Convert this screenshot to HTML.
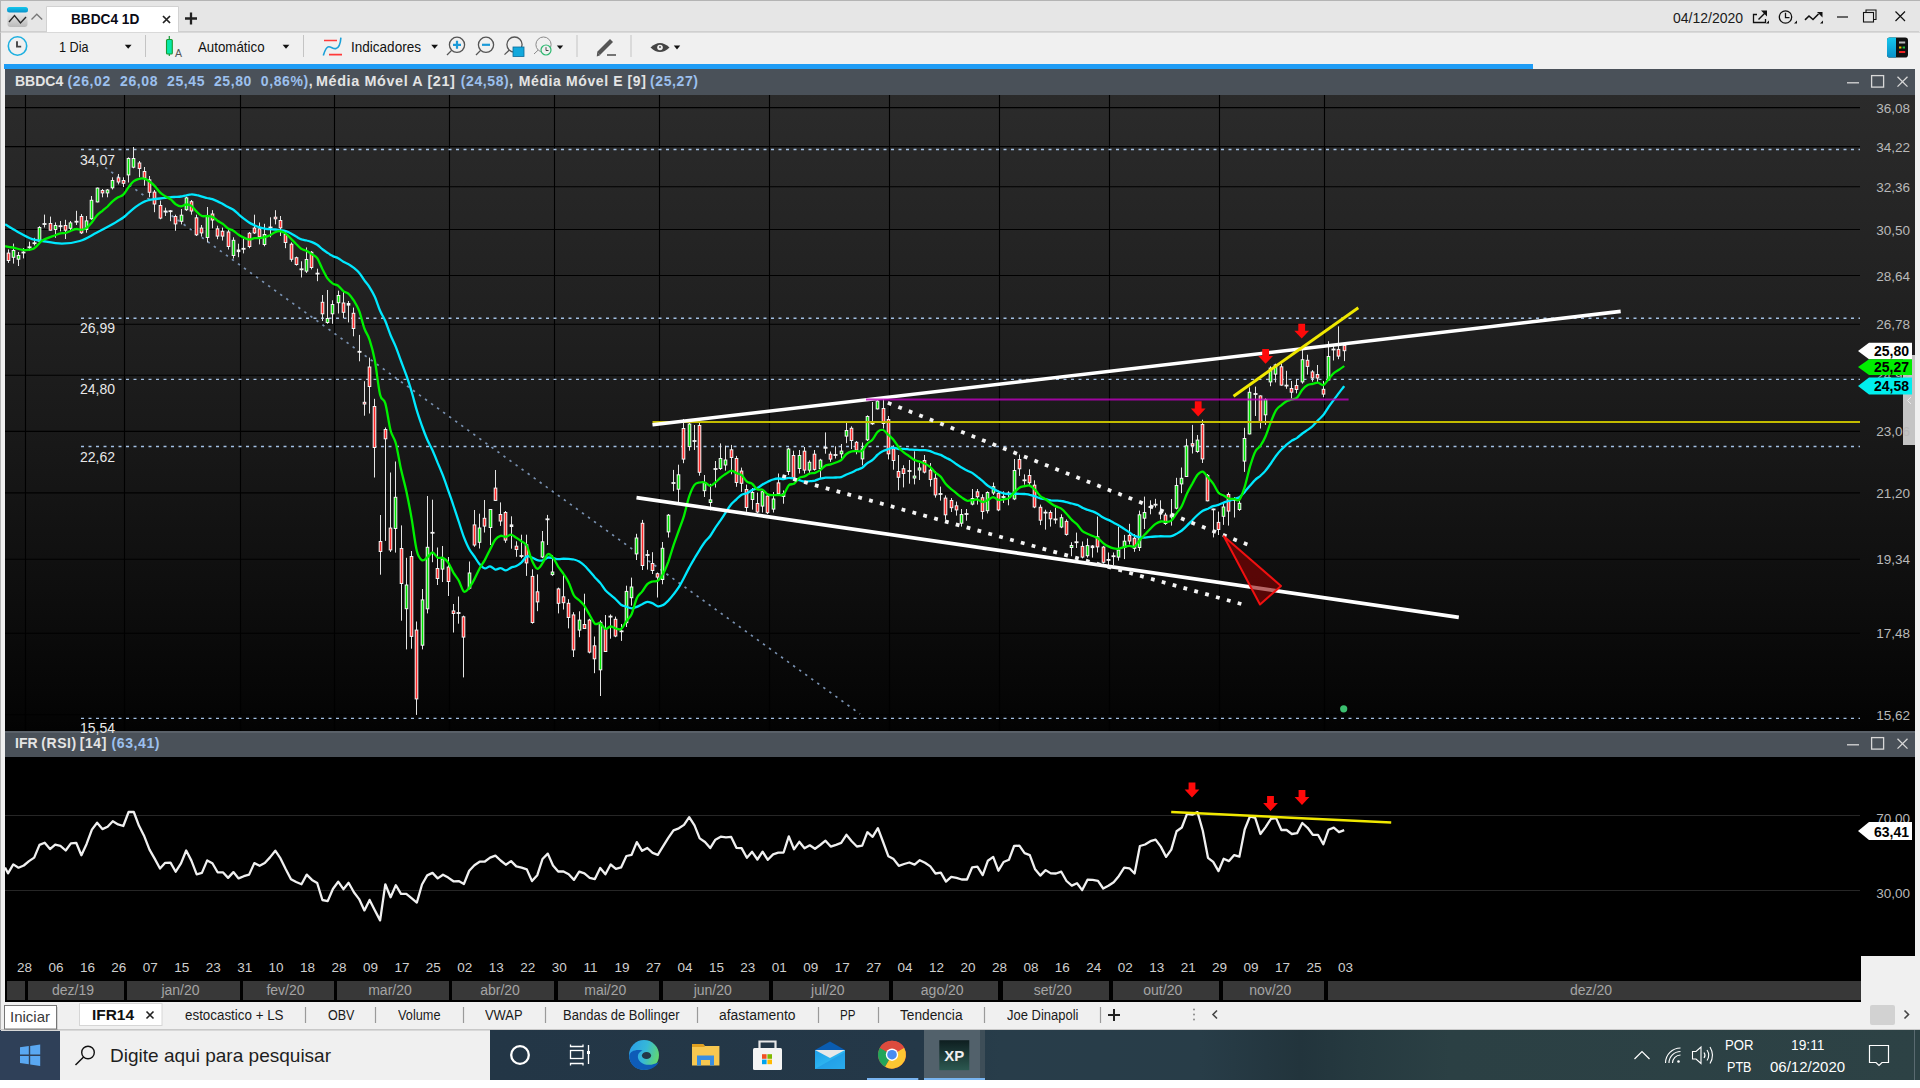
<!DOCTYPE html>
<html><head><meta charset="utf-8">
<style>
*{margin:0;padding:0;box-sizing:border-box}
html,body{width:1920px;height:1088px;overflow:hidden;background:#fff;font-family:"Liberation Sans",sans-serif;position:relative}
.a{position:absolute}
#titlebar{left:0;top:0;width:1920px;height:32px;background:#e6e6e6;border-top:1px solid #b4b4b4;border-left:1px solid #b4b4b4}
#toolbar{left:0;top:32px;width:1920px;height:38px;background:#f0f0f0;border-left:1px solid #b4b4b4;border-top:1px solid #d9d9d9}
#leftbar{left:0;top:64px;width:5px;height:966px;background:#f0f0f0;border-left:1px solid #b4b4b4}
#rightbar{left:1915px;top:64px;width:5px;height:966px;background:#f0f0f0}
#progress{left:4px;top:64px;width:1529px;height:5px;background:#1e9cf5}
.hdr{left:5px;width:1910px;height:26px;background:#4a5159}
.hdrtxt{left:15px;font-weight:bold;font-size:14px;color:#e6e6e6;white-space:nowrap}
.hdrtxt b{color:#9cc0ee;font-weight:bold}
#rsi{left:5px;top:757px;width:1910px;height:199px;background:#000}
#axis{left:5px;top:955px;width:1856px;height:47px;background:#000}
#tabs{left:0;top:1002px;width:1920px;height:28px;background:#f0f0f0;border-left:1px solid #b4b4b4}
#taskbar{left:0;top:1030px;width:1920px;height:50px;background:linear-gradient(90deg,#22344a,#24384a 35%,#29404a 70%,#2b4145)}
svg text{font-family:"Liberation Sans",sans-serif}
.pl{font-size:13.5px;fill:#b9b9b9;text-anchor:end}
.ll{font-size:14px;fill:#e8e8e8}
.tg{font-size:14px;font-weight:bold;fill:#000;text-anchor:end}
.dl{font-size:13.5px;color:#cfcfcf;white-space:nowrap;top:960px;transform:translateX(-50%)}
.mb{top:981px;height:19px;background:#383838;color:#a4a4a4;font-size:14px;text-align:center;line-height:19px;padding-right:6px}
.t13{font-size:13.5px;color:#111;white-space:nowrap}
.sep{width:1px;background:#9a9a9a}
.tb{color:#fff;white-space:nowrap}
.hb{font-weight:bold;font-size:14px;letter-spacing:0.6px;white-space:nowrap}
.tab{font-size:14px;color:#1a1a1a}
</style></head><body>
<div id="titlebar" class="a"></div>
<div id="toolbar" class="a"></div>
<div id="leftbar" class="a"></div>
<div id="rightbar" class="a"></div>
<div id="progress" class="a"></div>
<div class="a hdr" style="top:69px"></div>
<div class="a hdr" style="top:731px;border-top:2px solid #5a6169"></div>
<div id="rsi" class="a"></div>
<div id="axis" class="a"></div>
<svg class="a" style="left:0;top:0" width="1920" height="1088" viewBox="0 0 1920 1088">
<defs><linearGradient id="bg" x1="0" y1="0" x2="0" y2="1"><stop offset="0" stop-color="#2b2b2b"/><stop offset="0.35" stop-color="#202020"/><stop offset="0.55" stop-color="#181818"/><stop offset="0.8" stop-color="#0d0d0d"/><stop offset="1" stop-color="#030303"/></linearGradient><clipPath id="cc"><rect x="5" y="95" width="1910" height="636"/></clipPath><clipPath id="rc"><rect x="5" y="757" width="1855" height="198"/></clipPath></defs>
<rect x="5" y="95" width="1910" height="636" fill="url(#bg)"/>
<rect x="1903" y="355" width="12" height="90" fill="#c4c4c4"/><path d="M1911 397L1907.5 400.5L1911 404" fill="none" stroke="#e8e8e8" stroke-width="1"/>
<path d="M5 107.6H1860M5 146.6H1860M5 186.8H1860M5 229.5H1860M5 275.5H1860M5 324.2H1860M5 375.2H1860M5 431.4H1860M5 492.9H1860M5 559.3H1860M5 633.2H1860M5 714.8H1860M25.5 95V731M124.5 95V731M240.5 95V731M334.5 95V731M449.5 95V731M554.5 95V731M659.5 95V731M769.5 95V731M889.5 95V731M999.5 95V731M1109.5 95V731M1219.5 95V731M1324.5 95V731" stroke="#000" stroke-width="1.1" fill="none"/>
<text x="1910" y="112.6" class="pl">36,08</text>
<text x="1910" y="151.6" class="pl">34,22</text>
<text x="1910" y="191.8" class="pl">32,36</text>
<text x="1910" y="234.5" class="pl">30,50</text>
<text x="1910" y="280.5" class="pl">28,64</text>
<text x="1910" y="329.2" class="pl">26,78</text>
<text x="1910" y="380.2" class="pl">24,92</text>
<text x="1910" y="436.4" class="pl">23,06</text>
<text x="1910" y="497.9" class="pl">21,20</text>
<text x="1910" y="564.3" class="pl">19,34</text>
<text x="1910" y="638.2" class="pl">17,48</text>
<text x="1910" y="719.8" class="pl">15,62</text>
<path d="M81 149.5H1860" stroke="#a2c0e4" stroke-width="1.4" stroke-dasharray="3 4.5" fill="none"/>
<text x="80" y="164.5" class="ll">34,07</text>
<path d="M81 318.3H1860" stroke="#a2c0e4" stroke-width="1.4" stroke-dasharray="3 4.5" fill="none"/>
<text x="80" y="333.3" class="ll">26,99</text>
<path d="M81 379.4H1860" stroke="#a2c0e4" stroke-width="1.4" stroke-dasharray="3 4.5" fill="none"/>
<text x="80" y="394.4" class="ll">24,80</text>
<path d="M81 446.5H1860" stroke="#a2c0e4" stroke-width="1.4" stroke-dasharray="3 4.5" fill="none"/>
<text x="80" y="461.5" class="ll">22,62</text>
<path d="M81 718.4H1860" stroke="#a2c0e4" stroke-width="1.4" stroke-dasharray="3 4.5" fill="none"/>
<text x="80" y="733.4" class="ll">15,54</text>
<path d="M100.8 164.3L860.1 714" stroke="#7890b0" stroke-width="1.7" stroke-dasharray="2.4 5.05" stroke-dashoffset="2" fill="none"/>
<g clip-path="url(#cc)">
<path d="M8.5 249.4V262.9M13.5 243.6V263.6M18.5 252V266M23.5 248V258.4M29.5 241.7V250.7M34.5 237.8V245.5M39.5 226.2V243M44.5 214.6V227.5M50.5 216.6V230.7M55.5 222.4V237.8M60.5 221V231.4M65.5 219.8V239M70.5 221V230M76.5 210.8V225M81.5 214V234M86.5 216V232.7M91.5 196V219.8M97.5 187.6V202.4M102.5 189V197.3M107.5 189V197.3M112.5 177.3V189.5M118.5 174V184.4M123.5 177.3V187M128.5 157.4V182.5M133.5 147V168.3M139.5 161V177.3M144.5 167V185.7M149.5 176V197.3M154.5 190V212.2M160.5 200.6V219.3M165.5 207.7V216M170.5 210.2V221.2M175.5 214.7V230.8M181.5 209V224.4M186.5 196.7V210.9M191.5 200V214.7M196.5 214.7V236M201.5 225V236.6M207.5 207V242.4M212.5 210.2V228.3M217.5 225.7V239.2M222.5 227.6V240.5M228.5 229.5V249.5M233.5 237.3V258.5M238.5 243.7V257.2M243.5 238.6V253.4M249.5 232V248.2M254.5 214.7V234M259.5 222.5V244.4M264.5 223.8V246.3M270.5 217.3V237.3M275.5 210.2V224.4M280.5 216V236M285.5 231.5V248.2M291.5 242.4V261.7M296.5 256.6V265.6M301.5 261.3V277.5M306.5 247.4V273M311.5 251V269.4M317.5 268.7V281.2M322.5 295V321M327.5 290V323.8M332.5 300.3V323.8M338.5 290.7V313.5M343.5 292.2V318M348.5 301V322.4M353.5 307.6V336.3M359.5 334.9V361.3M364.5 381.2V415.7M369.5 357.6V413.5M374.5 398.8V477.5M380.5 515V574.7M385.5 427.5V540.9M390.5 472.5V552M395.5 461.5V552.6M401.5 525.4V620.7M406.5 557.8V649.4M411.5 551V648.7M416.5 621.5V714.9M422.5 589V649.4M427.5 496V613.4M432.5 499.7V562.2M437.5 547.5V585M442.5 546V582M448.5 557V596M453.5 604V632.5M458.5 596.5V623.7M463.5 615.6V677.4M469.5 561.5V589.4M474.5 510V546.8M479.5 513.7V548.5M484.5 500V532.5M490.5 509V545M495.5 470V500.9M500.5 502.4V525.9M505.5 511V542.8M511.5 516.3V548.7M516.5 541.3V556.8M521.5 534.7V558.2M526.5 534.7V575.9M532.5 569.3V623.7M537.5 574.4V611.2M542.5 531V558.2M547.5 514.9V545M552.5 555.3V575.9M558.5 587.6V613.4M563.5 575V609.5M568.5 599.2V628.4M573.5 612.2V657M579.5 611.3V637.2M584.5 593.7V629M589.5 618.8V653.4M594.5 636.5V673.2M600.5 620.3V696M605.5 615V652M610.5 614.4V638.7M615.5 616.6V637.2M621.5 624V640.9M626.5 585.7V627M631.5 577.6V605.6M636.5 533.8V560M642.5 519.9V570M647.5 550V569.6M652.5 552.2V574M657.5 572.5V597.5M662.5 542V584.3M668.5 514V537.5M673.5 469.9V491.2M678.5 464.7V502.2M683.5 419V463.2M689.5 422V450.7M694.5 425V450M699.5 422V475.7M704.5 475V497M710.5 483.8V510.3M715.5 461V487.5M720.5 443.4V469.9M725.5 445.6V470.6M731.5 444.9V474.3M736.5 455.9V486.8M741.5 467.6V491.9M746.5 484.6V511.8M752.5 488V509.6M757.5 492.6V513.2M762.5 490.4V512.5M767.5 494.9V514M773.5 492V512.5M778.5 473.5V494.9M783.5 490.4V503.7M788.5 447.8V475M793.5 450.7V479.4M799.5 450V473.5M804.5 447V473.5M809.5 460.3V474.3M814.5 450V470.6M820.5 458.8V478M825.5 432.4V453.7M830.5 451.5V461.8M835.5 446.3V458.5M841.5 444V459.4M846.5 422.6V443.2M851.5 426.3V449M856.5 441V454.3M862.5 442.5V465.3M867.5 415.3V441M872.5 402V424.9M877.5 398V409.4M883.5 399V428.5M888.5 416V459.4M893.5 445.4V469.7M898.5 455V490.3M903.5 465.3V487.4M909.5 460V483.7M914.5 451.3V484.4M919.5 463V480M924.5 455V473.4M930.5 463V486.6M935.5 471.2V497.6M940.5 486.6V500.6M945.5 495.4V519.7M951.5 498V512M956.5 501.6V515.6M961.5 509V526.6M966.5 509V520.7M972.5 489V505.3M977.5 489V504.6M982.5 494.3V519.3M987.5 491.3V513.4M993.5 482.5V495M998.5 490.6V511.2M1003.5 491.3V503M1008.5 491.3V505.3M1014.5 459V500.1M1019.5 454.6V475.9M1024.5 474.4V484.7M1029.5 469.3V486.2M1034.5 480.3V508.2M1040.5 504.6V525.1M1045.5 509.7V529.6M1050.5 510.4V526.6M1055.5 507.6V523.8M1061.5 514.3V528.2M1066.5 519.4V535.6M1071.5 542.2V556.2M1076.5 532.6V548M1082.5 541.5V558.4M1087.5 538.5V557.6M1092.5 545.1V557.6M1097.5 516.5V552.5M1103.5 545.9V563.5M1108.5 552.5V565M1113.5 552.5V565M1118.5 526.8V560.6M1124.5 534.9V559.1M1129.5 523.8V544.4M1134.5 534V551.8M1139.5 510.6V551M1144.5 496.6V529M1150.5 500.3V514.3M1155.5 498.8V507.6M1160.5 500.3V519.4M1165.5 512.8V524.9M1171.5 499V525.6M1176.5 477.8V509.4M1181.5 467.5V493.2M1186.5 438.8V477M1192.5 424.9V453.5M1197.5 435V452.8M1202.5 419.7V463M1207.5 474V501.3M1213.5 508.7V537.4M1218.5 511.6V535M1223.5 503.5V524.9M1228.5 492.5V525.6M1234.5 497V517.5M1239.5 500.6V510.9M1244.5 427.8V471.9M1249.5 387.4V434.4M1255.5 386.6V416M1260.5 395.4V428.5M1265.5 398.4V424.9M1270.5 366.3V386.2M1275.5 363.7V382.4M1281.5 363.7V385.6M1286.5 370.8V388.8M1291.5 381V398.5M1296.5 379.2V393.3M1302.5 349.5V383.7M1307.5 354.7V374.6M1312.5 370.1V381.7M1317.5 365V382.4M1323.5 381V397.2M1328.5 341.2V381M1333.5 345.7V360.5M1338.5 326.4V359.2M1344.5 344V361.1" stroke="#e4e4e4" stroke-width="1" fill="none"/>
<g fill="#f4f4f4"><rect x="6.7" y="252.6" width="3.6" height="8.4"/><rect x="11.7" y="250" width="3.6" height="7.8"/><rect x="16.7" y="255" width="3.6" height="4.7"/><rect x="21.5" y="251.6" width="4" height="1.8"/><rect x="27.5" y="246.4" width="4" height="1.8"/><rect x="32.5" y="242.3" width="4" height="1.8"/><rect x="37.7" y="227" width="3.6" height="14.7"/><rect x="42.5" y="223.1" width="4" height="1.8"/><rect x="48.7" y="223" width="3.6" height="7.7"/><rect x="53.7" y="225" width="3.6" height="5"/><rect x="58.5" y="225.3" width="4" height="1.8"/><rect x="63.7" y="225" width="3.6" height="5.7"/><rect x="68.7" y="222.4" width="3.6" height="6.4"/><rect x="74.5" y="220.8" width="4" height="1.8"/><rect x="79.7" y="216" width="3.6" height="17.3"/><rect x="84.7" y="220.4" width="3.6" height="9.6"/><rect x="89.7" y="199.8" width="3.6" height="19.4"/><rect x="95.7" y="187.6" width="3.6" height="14.8"/><rect x="100.7" y="190" width="3.6" height="3.4"/><rect x="105.7" y="189.5" width="3.6" height="3.9"/><rect x="110.7" y="180" width="3.6" height="8.3"/><rect x="116.7" y="177.3" width="3.6" height="5.2"/><rect x="121.7" y="180" width="3.6" height="3.8"/><rect x="126.7" y="158" width="3.6" height="17.4"/><rect x="131.7" y="158" width="3.6" height="9.7"/><rect x="137.7" y="162.5" width="3.6" height="6.5"/><rect x="142.7" y="171" width="3.6" height="7.6"/><rect x="147.7" y="179.3" width="3.6" height="13.5"/><rect x="152.7" y="191.6" width="3.6" height="12.9"/><rect x="158.7" y="205" width="3.6" height="13.6"/><rect x="163.5" y="210.6" width="4" height="1.8"/><rect x="168.5" y="210.3" width="4" height="1.8"/><rect x="173.7" y="216" width="3.6" height="8.4"/><rect x="179.7" y="214.7" width="3.6" height="7.1"/><rect x="184.7" y="197.4" width="3.6" height="12.8"/><rect x="189.7" y="201.2" width="3.6" height="10.3"/><rect x="194.7" y="217.3" width="3.6" height="18"/><rect x="199.7" y="227.6" width="3.6" height="5.8"/><rect x="205.7" y="216" width="3.6" height="22"/><rect x="210.7" y="213.5" width="3.6" height="7"/><rect x="215.7" y="228.3" width="3.6" height="8.3"/><rect x="220.7" y="230.8" width="3.6" height="5.8"/><rect x="226.7" y="231.5" width="3.6" height="15.5"/><rect x="231.7" y="239.8" width="3.6" height="16.2"/><rect x="236.7" y="249.5" width="3.6" height="2.6"/><rect x="241.5" y="247.9" width="4" height="1.8"/><rect x="247.7" y="232.8" width="3.6" height="14.2"/><rect x="252.7" y="227.6" width="3.6" height="5.8"/><rect x="257.7" y="228.3" width="3.6" height="9"/><rect x="262.7" y="234" width="3.6" height="11"/><rect x="268.5" y="226.6" width="4" height="1.8"/><rect x="273.7" y="216.7" width="3.6" height="2.6"/><rect x="278.7" y="220" width="3.6" height="8.3"/><rect x="283.7" y="234" width="3.6" height="9"/><rect x="289.7" y="243.7" width="3.6" height="16.1"/><rect x="294.7" y="257.2" width="3.6" height="7.8"/><rect x="299.5" y="268.4" width="4" height="1.8"/><rect x="304.7" y="259" width="3.6" height="12.6"/><rect x="309.7" y="251.8" width="3.6" height="16.2"/><rect x="315.5" y="272.7" width="4" height="1.8"/><rect x="320.7" y="301.8" width="3.6" height="12.5"/><rect x="325.7" y="318" width="3.6" height="5"/><rect x="330.7" y="304" width="3.6" height="10.3"/><rect x="336.7" y="295" width="3.6" height="8.2"/><rect x="341.7" y="302.5" width="3.6" height="10.3"/><rect x="346.7" y="303" width="3.6" height="2.6"/><rect x="351.7" y="312.8" width="3.6" height="16.2"/><rect x="357.5" y="350.9" width="4" height="1.8"/><rect x="362.7" y="401.8" width="3.6" height="2.7"/><rect x="367.7" y="366.5" width="3.6" height="20.5"/><rect x="372.7" y="406" width="3.6" height="42"/><rect x="378.7" y="541" width="3.6" height="11"/><rect x="383.7" y="429" width="3.6" height="10.3"/><rect x="388.7" y="527.6" width="3.6" height="22.8"/><rect x="393.7" y="496.8" width="3.6" height="32.2"/><rect x="399.7" y="548" width="3.6" height="36"/><rect x="404.7" y="584.5" width="3.6" height="24.7"/><rect x="409.7" y="556" width="3.6" height="80.9"/><rect x="414.7" y="629.6" width="3.6" height="69.8"/><rect x="420.7" y="599.4" width="3.6" height="46.3"/><rect x="425.7" y="546.8" width="3.6" height="62.5"/><rect x="430.5" y="531.9" width="4" height="1.8"/><rect x="435.7" y="568" width="3.6" height="11"/><rect x="440.7" y="558.5" width="3.6" height="11.1"/><rect x="446.7" y="566.6" width="3.6" height="15.4"/><rect x="451.7" y="610.4" width="3.6" height="3.6"/><rect x="456.5" y="612.1" width="4" height="1.8"/><rect x="461.7" y="616.3" width="3.6" height="21.3"/><rect x="467.7" y="572.5" width="3.6" height="16.2"/><rect x="472.7" y="524.4" width="3.6" height="21.1"/><rect x="477.7" y="527.5" width="3.6" height="15.3"/><rect x="482.7" y="517.8" width="3.6" height="8.8"/><rect x="488.7" y="509" width="3.6" height="19"/><rect x="493.7" y="487.6" width="3.6" height="13.3"/><rect x="498.7" y="514" width="3.6" height="7.5"/><rect x="503.7" y="512" width="3.6" height="28.6"/><rect x="509.7" y="524.4" width="3.6" height="2.6"/><rect x="514.7" y="545.7" width="3.6" height="4.3"/><rect x="519.5" y="555.1" width="4" height="1.8"/><rect x="524.7" y="544.3" width="3.6" height="19.1"/><rect x="530.7" y="575.9" width="3.6" height="47.1"/><rect x="535.7" y="591.3" width="3.6" height="11.1"/><rect x="540.7" y="541.3" width="3.6" height="16.2"/><rect x="545.5" y="518.4" width="4" height="1.8"/><rect x="550.7" y="571.5" width="3.6" height="3.6"/><rect x="556.7" y="588.4" width="3.6" height="15.4"/><rect x="561.7" y="596.3" width="3.6" height="6.9"/><rect x="566.7" y="602.8" width="3.6" height="15.2"/><rect x="571.7" y="614.4" width="3.6" height="36"/><rect x="577.7" y="619.6" width="3.6" height="11"/><rect x="582.7" y="624" width="3.6" height="5"/><rect x="587.7" y="619.6" width="3.6" height="33"/><rect x="592.7" y="645.3" width="3.6" height="14"/><rect x="598.7" y="621.8" width="3.6" height="48.5"/><rect x="603.7" y="629" width="3.6" height="23"/><rect x="608.5" y="615.7" width="4" height="1.8"/><rect x="613.7" y="618.8" width="3.6" height="17.7"/><rect x="619.5" y="630.4" width="4" height="1.8"/><rect x="624.7" y="590.9" width="3.6" height="32.3"/><rect x="629.7" y="586.5" width="3.6" height="11.7"/><rect x="634.7" y="537.5" width="3.6" height="16.9"/><rect x="640.7" y="522.8" width="3.6" height="43.2"/><rect x="645.5" y="554.1" width="4" height="1.8"/><rect x="650.7" y="563" width="3.6" height="8"/><rect x="655.7" y="573.2" width="3.6" height="4.4"/><rect x="660.7" y="547.8" width="3.6" height="32.2"/><rect x="666.7" y="514.7" width="3.6" height="17.7"/><rect x="671.5" y="482.1" width="4" height="1.8"/><rect x="676.7" y="474.3" width="3.6" height="15.4"/><rect x="681.7" y="428" width="3.6" height="31.6"/><rect x="687.7" y="423.5" width="3.6" height="23.5"/><rect x="692.5" y="440.1" width="4" height="1.8"/><rect x="697.7" y="425" width="3.6" height="47.8"/><rect x="702.7" y="482.4" width="3.6" height="8.8"/><rect x="708.7" y="499.3" width="3.6" height="3.7"/><rect x="713.5" y="468.1" width="4" height="1.8"/><rect x="718.7" y="458" width="3.6" height="11"/><rect x="723.7" y="459.5" width="3.6" height="6"/><rect x="729.7" y="449.3" width="3.6" height="8.7"/><rect x="734.7" y="458" width="3.6" height="25"/><rect x="739.7" y="470.6" width="3.6" height="13.2"/><rect x="744.7" y="489" width="3.6" height="19"/><rect x="750.7" y="492" width="3.6" height="8"/><rect x="755.7" y="503" width="3.6" height="9.5"/><rect x="760.7" y="491.2" width="3.6" height="15.4"/><rect x="765.7" y="495.6" width="3.6" height="17.6"/><rect x="771.7" y="498.5" width="3.6" height="11.1"/><rect x="776.7" y="482.4" width="3.6" height="11.6"/><rect x="781.7" y="493.4" width="3.6" height="3.6"/><rect x="786.7" y="448.5" width="3.6" height="23.5"/><rect x="791.7" y="455" width="3.6" height="23"/><rect x="797.7" y="455" width="3.6" height="14"/><rect x="802.7" y="450.7" width="3.6" height="19.9"/><rect x="807.7" y="461.8" width="3.6" height="8.8"/><rect x="812.7" y="453.7" width="3.6" height="16.2"/><rect x="818.7" y="459.6" width="3.6" height="9.4"/><rect x="823.5" y="446.9" width="4" height="1.8"/><rect x="828.7" y="453.7" width="3.6" height="5.9"/><rect x="833.5" y="454.1" width="4" height="1.8"/><rect x="839.7" y="450.6" width="3.6" height="3.7"/><rect x="844.7" y="430" width="3.6" height="6.6"/><rect x="849.7" y="427.8" width="3.6" height="13.2"/><rect x="854.7" y="441.8" width="3.6" height="8.8"/><rect x="860.7" y="448.4" width="3.6" height="11"/><rect x="865.7" y="416" width="3.6" height="24.3"/><rect x="870.5" y="422.5" width="4" height="1.8"/><rect x="875.7" y="400.6" width="3.6" height="8.8"/><rect x="881.7" y="408" width="3.6" height="16"/><rect x="886.7" y="419" width="3.6" height="35.3"/><rect x="891.7" y="448.4" width="3.6" height="12.6"/><rect x="896.7" y="471" width="3.6" height="6.8"/><rect x="901.7" y="468.2" width="3.6" height="5.8"/><rect x="907.5" y="470.1" width="4" height="1.8"/><rect x="912.7" y="475.6" width="3.6" height="2.9"/><rect x="917.7" y="467.5" width="3.6" height="3"/><rect x="922.7" y="460" width="3.6" height="12.6"/><rect x="928.7" y="469.7" width="3.6" height="10.3"/><rect x="933.7" y="477.8" width="3.6" height="17.6"/><rect x="938.5" y="493.1" width="4" height="1.8"/><rect x="943.7" y="497.6" width="3.6" height="17.7"/><rect x="949.7" y="500" width="3.6" height="8.2"/><rect x="954.7" y="505.3" width="3.6" height="5.1"/><rect x="959.7" y="514" width="3.6" height="9.7"/><rect x="964.5" y="513.1" width="4" height="1.8"/><rect x="970.7" y="498" width="3.6" height="6.6"/><rect x="975.7" y="491.3" width="3.6" height="5.9"/><rect x="980.7" y="497.2" width="3.6" height="14.8"/><rect x="985.7" y="492" width="3.6" height="19.2"/><rect x="991.7" y="486.2" width="3.6" height="7.3"/><rect x="996.7" y="492.8" width="3.6" height="17.6"/><rect x="1001.5" y="496.1" width="4" height="1.8"/><rect x="1006.5" y="492.6" width="4" height="1.8"/><rect x="1012.7" y="470" width="3.6" height="29.4"/><rect x="1017.7" y="459" width="3.6" height="10.3"/><rect x="1022.5" y="479.4" width="4" height="1.8"/><rect x="1027.7" y="475" width="3.6" height="8.2"/><rect x="1032.7" y="484.7" width="3.6" height="22.8"/><rect x="1038.7" y="506.8" width="3.6" height="13.9"/><rect x="1043.5" y="511.7" width="4" height="1.8"/><rect x="1048.7" y="512" width="3.6" height="7.3"/><rect x="1053.5" y="518.5" width="4" height="1.8"/><rect x="1059.7" y="517.2" width="3.6" height="10.3"/><rect x="1064.7" y="520.9" width="3.6" height="14"/><rect x="1069.7" y="545" width="3.6" height="3"/><rect x="1074.5" y="541.3" width="4" height="1.8"/><rect x="1080.7" y="545.9" width="3.6" height="11.7"/><rect x="1085.7" y="545.1" width="3.6" height="11.1"/><rect x="1090.7" y="545.5" width="3.6" height="2.6"/><rect x="1095.7" y="536.3" width="3.6" height="11.1"/><rect x="1101.7" y="546.6" width="3.6" height="16.2"/><rect x="1106.5" y="559" width="4" height="1.8"/><rect x="1111.5" y="555.3" width="4" height="1.8"/><rect x="1116.7" y="549.6" width="3.6" height="8"/><rect x="1122.7" y="540.7" width="3.6" height="7.3"/><rect x="1127.7" y="534.9" width="3.6" height="6.6"/><rect x="1132.7" y="537.8" width="3.6" height="11"/><rect x="1137.7" y="514.3" width="3.6" height="33.7"/><rect x="1142.7" y="512" width="3.6" height="6.7"/><rect x="1148.5" y="506.1" width="4" height="1.8"/><rect x="1153.5" y="503.8" width="4" height="1.8"/><rect x="1158.7" y="512" width="3.6" height="2.6"/><rect x="1163.7" y="514.6" width="3.6" height="9.4"/><rect x="1169.7" y="514.6" width="3.6" height="2.9"/><rect x="1174.7" y="485" width="3.6" height="23.7"/><rect x="1179.7" y="477.8" width="3.6" height="6.6"/><rect x="1184.7" y="445.4" width="3.6" height="31.6"/><rect x="1190.7" y="443.2" width="3.6" height="3"/><rect x="1195.7" y="439.6" width="3.6" height="12.4"/><rect x="1200.7" y="424" width="3.6" height="35.4"/><rect x="1205.7" y="474.9" width="3.6" height="26.4"/><rect x="1211.5" y="508.5" width="4" height="1.8"/><rect x="1216.7" y="521.9" width="3.6" height="8.1"/><rect x="1221.7" y="506.5" width="3.6" height="10.3"/><rect x="1226.7" y="494" width="3.6" height="17.6"/><rect x="1232.5" y="499" width="4" height="1.8"/><rect x="1237.7" y="502.8" width="3.6" height="7.2"/><rect x="1242.7" y="438" width="3.6" height="23.6"/><rect x="1247.7" y="391.8" width="3.6" height="42.6"/><rect x="1253.5" y="393.1" width="4" height="1.8"/><rect x="1258.7" y="395.4" width="3.6" height="27.2"/><rect x="1263.7" y="399" width="3.6" height="16.3"/><rect x="1268.7" y="367.6" width="3.6" height="14.8"/><rect x="1273.7" y="364.4" width="3.6" height="10.2"/><rect x="1279.7" y="366.3" width="3.6" height="19.3"/><rect x="1284.5" y="384.7" width="4" height="1.8"/><rect x="1289.7" y="388" width="3.6" height="4.7"/><rect x="1294.7" y="385" width="3.6" height="5"/><rect x="1300.7" y="359.2" width="3.6" height="23.2"/><rect x="1305.7" y="359.8" width="3.6" height="7.1"/><rect x="1310.7" y="371.4" width="3.6" height="7.1"/><rect x="1315.7" y="374" width="3.6" height="4.5"/><rect x="1321.7" y="388.8" width="3.6" height="5.8"/><rect x="1326.7" y="356" width="3.6" height="24.4"/><rect x="1331.5" y="348.6" width="4" height="1.8"/><rect x="1336.7" y="348.9" width="3.6" height="7.7"/><rect x="1342.7" y="345" width="3.6" height="6.2"/></g>
<g fill="#00e600"><rect x="12.7" y="251" width="1.6" height="5.8"/><rect x="17.7" y="256" width="1.6" height="2.7"/><rect x="38.7" y="228" width="1.6" height="12.7"/><rect x="54.7" y="226" width="1.6" height="3"/><rect x="69.7" y="223.4" width="1.6" height="4.4"/><rect x="85.7" y="221.4" width="1.6" height="7.6"/><rect x="90.7" y="200.8" width="1.6" height="17.4"/><rect x="96.7" y="188.6" width="1.6" height="12.8"/><rect x="106.7" y="190.5" width="1.6" height="1.9"/><rect x="111.7" y="181" width="1.6" height="6.3"/><rect x="127.7" y="159" width="1.6" height="15.4"/><rect x="132.7" y="159" width="1.6" height="7.7"/><rect x="180.7" y="215.7" width="1.6" height="5.1"/><rect x="185.7" y="198.4" width="1.6" height="10.8"/><rect x="206.7" y="217" width="1.6" height="20"/><rect x="232.7" y="240.8" width="1.6" height="14.2"/><rect x="263.7" y="235" width="1.6" height="9"/><rect x="305.7" y="260" width="1.6" height="10.6"/><rect x="326.7" y="319" width="1.6" height="3"/><rect x="331.7" y="305" width="1.6" height="8.3"/><rect x="337.7" y="296" width="1.6" height="6.2"/><rect x="394.7" y="497.8" width="1.6" height="30.2"/><rect x="405.7" y="585.5" width="1.6" height="22.7"/><rect x="421.7" y="600.4" width="1.6" height="44.3"/><rect x="426.7" y="547.8" width="1.6" height="60.5"/><rect x="441.7" y="559.5" width="1.6" height="9.1"/><rect x="468.7" y="573.5" width="1.6" height="14.2"/><rect x="478.7" y="528.5" width="1.6" height="13.3"/><rect x="489.7" y="510" width="1.6" height="17"/><rect x="541.7" y="542.3" width="1.6" height="14.2"/><rect x="551.7" y="572.5" width="1.6" height="1.6"/><rect x="578.7" y="620.6" width="1.6" height="9"/><rect x="599.7" y="622.8" width="1.6" height="46.5"/><rect x="625.7" y="591.9" width="1.6" height="30.3"/><rect x="630.7" y="587.5" width="1.6" height="9.7"/><rect x="635.7" y="538.5" width="1.6" height="14.9"/><rect x="661.7" y="548.8" width="1.6" height="30.2"/><rect x="667.7" y="515.7" width="1.6" height="15.7"/><rect x="677.7" y="475.3" width="1.6" height="13.4"/><rect x="688.7" y="424.5" width="1.6" height="21.5"/><rect x="703.7" y="483.4" width="1.6" height="6.8"/><rect x="709.7" y="500.3" width="1.6" height="1.7"/><rect x="719.7" y="459" width="1.6" height="9"/><rect x="724.7" y="460.5" width="1.6" height="4"/><rect x="751.7" y="493" width="1.6" height="6"/><rect x="761.7" y="492.2" width="1.6" height="13.4"/><rect x="772.7" y="499.5" width="1.6" height="9.1"/><rect x="782.7" y="494.4" width="1.6" height="1.6"/><rect x="787.7" y="449.5" width="1.6" height="21.5"/><rect x="798.7" y="456" width="1.6" height="12"/><rect x="808.7" y="462.8" width="1.6" height="6.8"/><rect x="819.7" y="460.6" width="1.6" height="7.4"/><rect x="840.7" y="451.6" width="1.6" height="1.7"/><rect x="845.7" y="431" width="1.6" height="4.6"/><rect x="861.7" y="449.4" width="1.6" height="9"/><rect x="866.7" y="417" width="1.6" height="22.3"/><rect x="876.7" y="401.6" width="1.6" height="6.8"/><rect x="913.7" y="476.6" width="1.6" height="0.9"/><rect x="918.7" y="468.5" width="1.6" height="1"/><rect x="960.7" y="515" width="1.6" height="7.7"/><rect x="971.7" y="499" width="1.6" height="4.6"/><rect x="986.7" y="493" width="1.6" height="17.2"/><rect x="992.7" y="487.2" width="1.6" height="5.3"/><rect x="1013.7" y="471" width="1.6" height="27.4"/><rect x="1060.7" y="518.2" width="1.6" height="8.3"/><rect x="1070.7" y="546" width="1.6" height="1"/><rect x="1086.7" y="546.1" width="1.6" height="9.1"/><rect x="1117.7" y="550.6" width="1.6" height="6"/><rect x="1123.7" y="541.7" width="1.6" height="5.3"/><rect x="1138.7" y="515.3" width="1.6" height="31.7"/><rect x="1143.7" y="513" width="1.6" height="4.7"/><rect x="1170.7" y="515.6" width="1.6" height="0.9"/><rect x="1175.7" y="486" width="1.6" height="21.7"/><rect x="1180.7" y="478.8" width="1.6" height="4.6"/><rect x="1185.7" y="446.4" width="1.6" height="29.6"/><rect x="1196.7" y="440.6" width="1.6" height="10.4"/><rect x="1222.7" y="507.5" width="1.6" height="8.3"/><rect x="1238.7" y="503.8" width="1.6" height="5.2"/><rect x="1243.7" y="439" width="1.6" height="21.6"/><rect x="1248.7" y="392.8" width="1.6" height="40.6"/><rect x="1264.7" y="400" width="1.6" height="14.3"/><rect x="1269.7" y="368.6" width="1.6" height="12.8"/><rect x="1274.7" y="365.4" width="1.6" height="8.2"/><rect x="1301.7" y="360.2" width="1.6" height="21.2"/><rect x="1327.7" y="357" width="1.6" height="22.4"/></g>
<g fill="#ff2a2a"><rect x="7.7" y="253.6" width="1.6" height="6.4"/><rect x="49.7" y="224" width="1.6" height="5.7"/><rect x="64.7" y="226" width="1.6" height="3.7"/><rect x="80.7" y="217" width="1.6" height="15.3"/><rect x="101.7" y="191" width="1.6" height="1.4"/><rect x="117.7" y="178.3" width="1.6" height="3.2"/><rect x="122.7" y="181" width="1.6" height="1.8"/><rect x="138.7" y="163.5" width="1.6" height="4.5"/><rect x="143.7" y="172" width="1.6" height="5.6"/><rect x="148.7" y="180.3" width="1.6" height="11.5"/><rect x="153.7" y="192.6" width="1.6" height="10.9"/><rect x="159.7" y="206" width="1.6" height="11.6"/><rect x="174.7" y="217" width="1.6" height="6.4"/><rect x="190.7" y="202.2" width="1.6" height="8.3"/><rect x="195.7" y="218.3" width="1.6" height="16"/><rect x="200.7" y="228.6" width="1.6" height="3.8"/><rect x="211.7" y="214.5" width="1.6" height="5"/><rect x="216.7" y="229.3" width="1.6" height="6.3"/><rect x="221.7" y="231.8" width="1.6" height="3.8"/><rect x="227.7" y="232.5" width="1.6" height="13.5"/><rect x="248.7" y="233.8" width="1.6" height="12.2"/><rect x="253.7" y="228.6" width="1.6" height="3.8"/><rect x="258.7" y="229.3" width="1.6" height="7"/><rect x="274.7" y="217.7" width="1.6" height="0.6"/><rect x="279.7" y="221" width="1.6" height="6.3"/><rect x="284.7" y="235" width="1.6" height="7"/><rect x="290.7" y="244.7" width="1.6" height="14.1"/><rect x="295.7" y="258.2" width="1.6" height="5.8"/><rect x="310.7" y="252.8" width="1.6" height="14.2"/><rect x="321.7" y="302.8" width="1.6" height="10.5"/><rect x="342.7" y="303.5" width="1.6" height="8.3"/><rect x="352.7" y="313.8" width="1.6" height="14.2"/><rect x="363.7" y="402.8" width="1.6" height="0.7"/><rect x="368.7" y="367.5" width="1.6" height="18.5"/><rect x="373.7" y="407" width="1.6" height="40"/><rect x="379.7" y="542" width="1.6" height="9"/><rect x="384.7" y="430" width="1.6" height="8.3"/><rect x="389.7" y="528.6" width="1.6" height="20.8"/><rect x="400.7" y="549" width="1.6" height="34"/><rect x="410.7" y="557" width="1.6" height="78.9"/><rect x="415.7" y="630.6" width="1.6" height="67.8"/><rect x="436.7" y="569" width="1.6" height="9"/><rect x="447.7" y="567.6" width="1.6" height="13.4"/><rect x="452.7" y="611.4" width="1.6" height="1.6"/><rect x="462.7" y="617.3" width="1.6" height="19.3"/><rect x="473.7" y="525.4" width="1.6" height="19.1"/><rect x="483.7" y="518.8" width="1.6" height="6.8"/><rect x="494.7" y="488.6" width="1.6" height="11.3"/><rect x="499.7" y="515" width="1.6" height="5.5"/><rect x="504.7" y="513" width="1.6" height="26.6"/><rect x="515.7" y="546.7" width="1.6" height="2.3"/><rect x="525.7" y="545.3" width="1.6" height="17.1"/><rect x="531.7" y="576.9" width="1.6" height="45.1"/><rect x="536.7" y="592.3" width="1.6" height="9.1"/><rect x="557.7" y="589.4" width="1.6" height="13.4"/><rect x="562.7" y="597.3" width="1.6" height="4.9"/><rect x="567.7" y="603.8" width="1.6" height="13.2"/><rect x="572.7" y="615.4" width="1.6" height="34"/><rect x="583.7" y="625" width="1.6" height="3"/><rect x="588.7" y="620.6" width="1.6" height="31"/><rect x="593.7" y="646.3" width="1.6" height="12"/><rect x="604.7" y="630" width="1.6" height="21"/><rect x="614.7" y="619.8" width="1.6" height="15.7"/><rect x="641.7" y="523.8" width="1.6" height="41.2"/><rect x="651.7" y="564" width="1.6" height="6"/><rect x="656.7" y="574.2" width="1.6" height="2.4"/><rect x="682.7" y="429" width="1.6" height="29.6"/><rect x="698.7" y="426" width="1.6" height="45.8"/><rect x="730.7" y="450.3" width="1.6" height="6.7"/><rect x="735.7" y="459" width="1.6" height="23"/><rect x="740.7" y="471.6" width="1.6" height="11.2"/><rect x="745.7" y="490" width="1.6" height="17"/><rect x="756.7" y="504" width="1.6" height="7.5"/><rect x="766.7" y="496.6" width="1.6" height="15.6"/><rect x="777.7" y="483.4" width="1.6" height="9.6"/><rect x="792.7" y="456" width="1.6" height="21"/><rect x="803.7" y="451.7" width="1.6" height="17.9"/><rect x="813.7" y="454.7" width="1.6" height="14.2"/><rect x="829.7" y="454.7" width="1.6" height="3.9"/><rect x="850.7" y="428.8" width="1.6" height="11.2"/><rect x="855.7" y="442.8" width="1.6" height="6.8"/><rect x="882.7" y="409" width="1.6" height="14"/><rect x="887.7" y="420" width="1.6" height="33.3"/><rect x="892.7" y="449.4" width="1.6" height="10.6"/><rect x="897.7" y="472" width="1.6" height="4.8"/><rect x="902.7" y="469.2" width="1.6" height="3.8"/><rect x="923.7" y="461" width="1.6" height="10.6"/><rect x="929.7" y="470.7" width="1.6" height="8.3"/><rect x="934.7" y="478.8" width="1.6" height="15.6"/><rect x="944.7" y="498.6" width="1.6" height="15.7"/><rect x="950.7" y="501" width="1.6" height="6.2"/><rect x="955.7" y="506.3" width="1.6" height="3.1"/><rect x="976.7" y="492.3" width="1.6" height="3.9"/><rect x="981.7" y="498.2" width="1.6" height="12.8"/><rect x="997.7" y="493.8" width="1.6" height="15.6"/><rect x="1018.7" y="460" width="1.6" height="8.3"/><rect x="1028.7" y="476" width="1.6" height="6.2"/><rect x="1033.7" y="485.7" width="1.6" height="20.8"/><rect x="1039.7" y="507.8" width="1.6" height="11.9"/><rect x="1049.7" y="513" width="1.6" height="5.3"/><rect x="1065.7" y="521.9" width="1.6" height="12"/><rect x="1081.7" y="546.9" width="1.6" height="9.7"/><rect x="1096.7" y="537.3" width="1.6" height="9.1"/><rect x="1102.7" y="547.6" width="1.6" height="14.2"/><rect x="1128.7" y="535.9" width="1.6" height="4.6"/><rect x="1133.7" y="538.8" width="1.6" height="9"/><rect x="1164.7" y="515.6" width="1.6" height="7.4"/><rect x="1191.7" y="444.2" width="1.6" height="1"/><rect x="1201.7" y="425" width="1.6" height="33.4"/><rect x="1206.7" y="475.9" width="1.6" height="24.4"/><rect x="1217.7" y="522.9" width="1.6" height="6.1"/><rect x="1227.7" y="495" width="1.6" height="15.6"/><rect x="1259.7" y="396.4" width="1.6" height="25.2"/><rect x="1280.7" y="367.3" width="1.6" height="17.3"/><rect x="1290.7" y="389" width="1.6" height="2.7"/><rect x="1295.7" y="386" width="1.6" height="3"/><rect x="1306.7" y="360.8" width="1.6" height="5.1"/><rect x="1311.7" y="372.4" width="1.6" height="5.1"/><rect x="1316.7" y="375" width="1.6" height="2.5"/><rect x="1322.7" y="389.8" width="1.6" height="3.8"/><rect x="1337.7" y="349.9" width="1.6" height="5.7"/><rect x="1343.7" y="346" width="1.6" height="4.2"/></g>
<path d="M5.1 224.3C7.5 225.7 14.8 230.2 19.3 232.7C23.8 235.2 28.3 237.7 32.2 239.1C36.1 240.5 37.6 240.2 42.5 241C47.4 241.8 55.6 243.6 61.8 243.6C68 243.6 74 242.8 79.8 241C85.6 239.2 90.9 235.6 96.5 232.7C102.1 229.8 109.7 225.7 113.3 223.7C116.9 221.7 116.4 221.7 118.1 220.7C119.8 219.7 121.6 218.8 123.3 217.5C125.1 216.2 126.8 214.4 128.6 212.9C130.3 211.3 132.1 209.7 133.8 208.3C135.5 206.9 137.3 205.7 139 204.6C140.8 203.5 142.5 202.3 144.3 201.6C146 200.8 147.8 200.4 149.5 199.9C151.3 199.5 153 199.3 154.8 199C156.5 198.8 158.3 198.7 160 198.5C161.7 198.3 163.5 198.1 165.2 197.9C167 197.6 168.7 197.3 170.5 197.2C172.2 197 174 197 175.7 196.9C177.5 196.8 179.2 196.8 181 196.5C182.7 196.3 184.5 195.7 186.2 195.4C187.9 195 189.7 194.4 191.4 194.4C193.2 194.3 194.9 194.7 196.7 195.1C198.4 195.4 200.2 196.1 201.9 196.6C203.7 197.1 205.4 197.5 207.2 198C208.9 198.4 210.7 198.7 212.4 199.2C214.1 199.8 215.9 200.6 217.6 201.4C219.4 202.2 221.1 203.2 222.9 204.1C224.6 205.1 226.4 206.2 228.1 207.1C229.9 208.1 231.6 208.6 233.4 209.8C235.1 211 236.9 212.8 238.6 214.3C240.3 215.8 242.1 217.3 243.8 218.7C245.6 220.1 247.3 221.4 249.1 222.5C250.8 223.6 252.6 224.4 254.3 225.2C256.1 226 257.8 226.7 259.6 227.3C261.3 227.9 263.1 228.4 264.8 228.7C266.5 229 268.3 229 270 229.2C271.8 229.3 273.5 229.3 275.3 229.5C277 229.7 278.8 230.1 280.5 230.4C282.3 230.6 284 230.7 285.8 231.2C287.5 231.7 289.3 232.5 291 233.4C292.7 234.3 294.5 235.6 296.2 236.6C298 237.6 299.7 238.7 301.5 239.4C303.2 240 305 240 306.7 240.5C308.5 240.9 310.2 241.4 312 242.1C313.7 242.8 315.5 243.7 317.2 244.8C318.9 246 320.7 247.8 322.4 249.2C324.2 250.5 325.9 251.8 327.7 252.9C329.4 254.1 331.2 255.2 332.9 256.1C334.7 257 336.4 257.4 338.2 258.3C339.9 259.2 341.7 260.7 343.4 261.7C345.1 262.7 346.9 263.2 348.6 264.2C350.4 265.2 352.1 266.5 353.9 267.9C355.6 269.3 357.4 270.6 359.1 272.7C360.9 274.8 362.6 278 364.4 280.4C366.1 282.8 367.9 284.5 369.6 287.3C371.3 290 373.1 292.9 374.8 296.8C376.6 300.7 378.3 306.6 380.1 310.7C381.8 314.7 383.6 316.9 385.3 321C387.1 325.1 388.8 330.9 390.6 335.2C392.3 339.5 394.1 342.6 395.8 346.9C397.5 351.2 399.3 356.3 401 361C402.8 365.8 404.5 370.2 406.3 375.2C408 380.3 409.8 385.4 411.5 391.3C413.3 397.2 415 404.6 416.8 410.4C418.5 416.2 420.3 421.1 422 426C423.7 430.8 425.5 435.5 427.2 439.5C429 443.5 430.7 446.4 432.5 450.3C434.2 454.2 436 458.6 437.7 462.9C439.5 467.1 441.2 471.1 443 475.7C444.7 480.3 446.5 485.4 448.2 490.4C449.9 495.3 451.7 500.3 453.4 505.5C455.2 510.7 456.9 516.2 458.7 521.5C460.4 526.7 462.2 532.6 463.9 537.2C465.7 541.8 467.4 545.8 469.2 549C470.9 552.2 472.7 554 474.4 556.5C476.1 559 477.9 562.3 479.6 564.2C481.4 566.2 483.1 568.1 484.9 568.4C486.6 568.8 488.4 566.1 490.1 566.3C491.9 566.5 493.6 569.3 495.4 569.6C497.1 569.9 498.9 568 500.6 568.2C502.3 568.3 504.1 570.5 505.8 570.4C507.6 570.3 509.3 568.4 511.1 567.6C512.8 566.9 514.6 566.9 516.3 566C518.1 565.1 519.8 563.9 521.6 562.3C523.3 560.7 525.1 557.2 526.8 556.4C528.5 555.6 530.3 556.9 532 557.5C533.8 558.1 535.5 559.6 537.3 560.1C539 560.6 540.8 560.9 542.5 560.5C544.3 560.1 546 558 547.8 557.6C549.5 557.2 551.3 557.9 553 558.2C554.7 558.5 556.5 559.1 558.2 559.2C560 559.3 561.7 558.8 563.5 558.7C565.2 558.7 567 558.8 568.7 558.9C570.5 559.1 572.2 559 574 559.5C575.7 559.9 577.5 560.6 579.2 561.6C580.9 562.6 582.7 563.9 584.4 565.5C586.2 567.1 587.9 569.3 589.7 571.3C591.4 573.2 593.2 575.5 594.9 577.4C596.7 579.4 598.4 580.8 600.2 582.9C601.9 585 603.7 588.2 605.4 590.2C607.1 592.2 608.9 593.4 610.6 594.9C612.4 596.5 614.1 597.9 615.9 599.5C617.6 601.2 619.4 603.5 621.1 604.7C622.9 605.9 624.6 606.1 626.4 606.7C628.1 607.3 629.9 608.2 631.6 608.3C633.3 608.3 635.1 607.6 636.8 606.9C638.6 606.2 640.3 605 642.1 604.2C643.8 603.3 645.6 602 647.3 601.8C649.1 601.7 650.8 602.6 652.6 603.3C654.3 604.1 656.1 606 657.8 606.3C659.5 606.6 661.3 606.1 663 605.1C664.8 604.2 666.5 602.4 668.3 600.6C670 598.8 671.8 596.7 673.5 594.4C675.3 592.2 677 590 678.8 587.2C680.5 584.4 682.3 580.9 684 577.7C685.7 574.4 687.5 570.9 689.2 567.6C691 564.4 692.7 561.3 694.5 558.3C696.2 555.3 698 552.6 699.7 549.8C701.5 547.1 703.2 544 705 541.7C706.7 539.4 708.5 538.4 710.2 536C711.9 533.7 713.7 530.2 715.4 527.6C717.2 525 718.9 522.8 720.7 520.2C722.4 517.6 724.2 514.8 725.9 512.1C727.7 509.4 729.4 506.4 731.2 504.2C732.9 502.1 734.7 500.9 736.4 499.3C738.1 497.7 739.9 495.7 741.6 494.7C743.4 493.7 745.1 494.1 746.9 493.3C748.6 492.6 750.4 490.9 752.1 490C753.9 489.1 755.6 489 757.4 488.1C759.1 487.2 760.9 485.6 762.6 484.5C764.3 483.4 766.1 482.5 767.8 481.7C769.6 480.9 771.3 480 773.1 479.5C774.8 479 776.6 478.6 778.3 478.5C780.1 478.4 781.8 479.1 783.6 479C785.3 478.9 787.1 477.8 788.8 477.8C790.5 477.7 792.3 478.2 794 478.6C795.8 479.1 797.5 479.7 799.3 480.2C801 480.7 802.8 481.5 804.5 481.7C806.3 481.8 808 481.3 809.8 481.2C811.5 481 813.3 481 815 480.6C816.7 480.1 818.5 479.2 820.2 478.7C822 478.2 823.7 477.8 825.5 477.6C827.2 477.5 829 477.7 830.7 477.7C832.5 477.7 834.2 477.6 836 477.5C837.7 477.4 839.5 477.6 841.2 477.1C842.9 476.6 844.7 475.3 846.4 474.5C848.2 473.8 849.9 473.3 851.7 472.5C853.4 471.7 855.2 470.6 856.9 469.8C858.7 469 860.4 468.8 862.2 467.7C863.9 466.6 865.7 464.4 867.4 463.1C869.1 461.8 870.9 461.3 872.6 459.8C874.4 458.4 876.1 455.9 877.9 454.5C879.6 453 881.4 451.8 883.1 451C884.9 450.1 886.6 449.7 888.4 449.1C890.1 448.6 891.9 447.7 893.6 447.6C895.3 447.6 897.1 448.8 898.8 449C900.6 449.2 902.3 448.7 904.1 448.8C905.8 448.9 907.6 449.4 909.3 449.6C911.1 449.7 912.8 449.7 914.6 449.8C916.3 449.9 918.1 450 919.8 450.1C921.5 450.1 923.3 450 925 450.2C926.8 450.4 928.5 450.6 930.3 451.1C932 451.7 933.8 452.7 935.5 453.3C937.3 454 939 454.2 940.8 454.9C942.5 455.7 944.3 456.8 946 457.7C947.7 458.6 949.5 459.3 951.2 460.4C953 461.4 954.7 463 956.5 464.2C958.2 465.4 960 466.5 961.7 467.6C963.5 468.6 965.2 469.7 967 470.5C968.7 471.4 970.5 471.8 972.2 472.9C973.9 474 975.7 475.5 977.4 476.9C979.2 478.2 980.9 479.7 982.7 481.2C984.4 482.6 986.2 484.5 987.9 485.7C989.7 487 991.4 487.9 993.2 488.8C994.9 489.8 996.7 490.8 998.4 491.5C1000.1 492.3 1001.9 492.9 1003.6 493.3C1005.4 493.7 1007.1 493.9 1008.9 494C1010.6 494.1 1012.4 493.9 1014.1 493.8C1015.9 493.8 1017.6 493.7 1019.4 493.8C1021.1 493.8 1022.9 493.8 1024.6 494C1026.3 494.2 1028.1 494.3 1029.8 494.8C1031.6 495.2 1033.3 495.8 1035.1 496.4C1036.8 497 1038.6 497.9 1040.3 498.4C1042.1 498.8 1043.8 498.8 1045.6 499.2C1047.3 499.5 1049.1 500.1 1050.8 500.4C1052.5 500.6 1054.3 500.5 1056 500.6C1057.8 500.7 1059.5 500.7 1061.3 501C1063 501.2 1064.8 501.7 1066.5 502.1C1068.3 502.5 1070 503.1 1071.8 503.5C1073.5 504 1075.3 504.2 1077 504.8C1078.7 505.5 1080.5 506.8 1082.2 507.6C1084 508.4 1085.7 509.2 1087.5 509.8C1089.2 510.5 1091 510.7 1092.7 511.4C1094.5 512.1 1096.2 513 1098 514C1099.7 515 1101.5 516.6 1103.2 517.6C1104.9 518.6 1106.7 519.1 1108.4 519.9C1110.2 520.8 1111.9 521.8 1113.7 522.7C1115.4 523.6 1117.2 524.4 1118.9 525.4C1120.7 526.4 1122.4 527.7 1124.2 528.9C1125.9 530 1127.7 531.3 1129.4 532.4C1131.1 533.6 1132.9 535 1134.6 535.8C1136.4 536.6 1138.1 537 1139.9 537.3C1141.6 537.6 1143.4 537.6 1145.1 537.6C1146.9 537.5 1148.6 537.1 1150.4 536.9C1152.1 536.7 1153.9 536.6 1155.6 536.5C1157.3 536.4 1159.1 536.2 1160.8 536.1C1162.6 536.1 1164.3 536.3 1166.1 536.4C1167.8 536.4 1169.6 536.7 1171.3 536.2C1173.1 535.8 1174.8 534.7 1176.6 533.8C1178.3 532.8 1180.1 531.8 1181.8 530.5C1183.5 529.1 1185.3 527.4 1187 525.6C1188.8 523.9 1190.5 522 1192.3 520.2C1194 518.4 1195.8 516.5 1197.5 515C1199.3 513.4 1201 511.9 1202.8 510.8C1204.5 509.8 1206.3 509.4 1208 508.7C1209.7 507.9 1211.5 506.8 1213.2 506.2C1215 505.6 1216.7 505.5 1218.5 504.9C1220.2 504.3 1222 503.3 1223.7 502.6C1225.5 501.9 1227.2 501.5 1229 500.8C1230.7 500.2 1232.5 499.6 1234.2 499C1235.9 498.3 1237.7 498.4 1239.4 497.2C1241.2 496 1242.9 493.8 1244.7 491.9C1246.4 490 1248.2 487.7 1249.9 485.8C1251.7 483.8 1253.4 481.5 1255.2 479.9C1256.9 478.2 1258.7 477.3 1260.4 475.8C1262.1 474.2 1263.9 472.7 1265.6 470.6C1267.4 468.5 1269.1 465.9 1270.9 463.5C1272.6 461 1274.4 458 1276.1 455.7C1277.9 453.4 1279.6 451.3 1281.4 449.5C1283.1 447.7 1284.9 446.2 1286.6 444.7C1288.3 443.2 1290.1 441.7 1291.8 440.6C1293.6 439.5 1295.3 439.1 1297.1 437.9C1298.8 436.7 1300.6 434.9 1302.3 433.5C1304.1 432.2 1305.8 431.2 1307.6 429.9C1309.3 428.7 1311.1 427.6 1312.8 426C1314.5 424.4 1316.3 422.1 1318 420.3C1319.8 418.5 1321.5 417.3 1323.3 415.1C1325 412.9 1326.8 409.7 1328.5 407.1C1330.3 404.6 1332 402.3 1333.8 399.9C1335.5 397.5 1337.3 395.2 1339 392.9C1340.7 390.6 1343.4 387.3 1344.2 386.1" fill="none" stroke="#00e8ff" stroke-width="2.3" stroke-linejoin="round"/>
<path d="M5.1 246.2C6.4 246.4 9.9 246.9 12.9 247.5C15.9 248.1 19.8 249.8 23.2 250C26.6 250.2 30.3 250.4 33.5 248.8C36.7 247.2 38.9 242.7 42.5 240.4C46.1 238.1 52.3 236.4 55.3 235.2C58.3 234 58.7 233.8 60.4 233.4C62.2 233.1 63.9 233.3 65.7 232.9C67.4 232.4 69.2 231.4 70.9 230.8C72.7 230.1 74.4 229.1 76.2 229C77.9 228.8 79.7 230 81.4 229.8C83.1 229.7 84.9 229.2 86.6 227.9C88.4 226.7 90.1 224.3 91.9 222.2C93.6 220.1 95.4 217.1 97.1 215.2C98.9 213.3 100.6 212.2 102.4 210.8C104.1 209.3 105.9 208.1 107.6 206.5C109.3 204.8 111.1 202.6 112.8 201.1C114.6 199.6 116.3 198.4 118.1 197.3C119.8 196.3 121.6 196.3 123.3 194.6C125.1 192.9 126.8 189.4 128.6 187.1C130.3 184.9 132.1 182.6 133.8 181.2C135.5 179.8 137.3 179.2 139 178.8C140.8 178.3 142.5 178.3 144.3 178.7C146 179.2 147.8 180.3 149.5 181.5C151.3 182.7 153 184.2 154.8 186.1C156.5 187.9 158.3 190.8 160 192.4C161.7 194.1 163.5 195.1 165.2 196.2C167 197.3 168.7 197.9 170.5 199.2C172.2 200.5 174 203 175.7 204.2C177.5 205.3 179.2 206.2 181 206.3C182.7 206.3 184.5 204.5 186.2 204.5C187.9 204.4 189.7 204.7 191.4 205.9C193.2 207.1 194.9 210 196.7 211.7C198.4 213.4 200.2 215.2 201.9 216C203.7 216.7 205.4 215.8 207.2 216C208.9 216.1 210.7 216.1 212.4 216.9C214.1 217.7 215.9 219.6 217.6 220.8C219.4 222 221.1 222.6 222.9 223.9C224.6 225.2 226.4 227.3 228.1 228.5C229.9 229.6 231.6 229.7 233.4 230.7C235.1 231.8 236.9 233.7 238.6 234.8C240.3 236 242.1 236.8 243.8 237.6C245.6 238.4 247.3 239.4 249.1 239.5C250.8 239.6 252.6 238.5 254.3 238.2C256.1 238 257.8 238.2 259.6 238.1C261.3 237.9 263.1 237.7 264.8 237.2C266.5 236.8 268.3 236.1 270 235.3C271.8 234.4 273.5 232.7 275.3 232.1C277 231.4 278.8 231 280.5 231.3C282.3 231.6 284 232.4 285.8 233.6C287.5 234.9 289.3 237.1 291 238.8C292.7 240.5 294.5 242.3 296.2 244C298 245.6 299.7 247.8 301.5 248.9C303.2 250.1 305 250 306.7 250.9C308.5 251.8 310.2 253.1 312 254.3C313.7 255.5 315.5 255.7 317.2 258.1C318.9 260.6 320.7 265.6 322.4 269C324.2 272.4 325.9 276.1 327.7 278.6C329.4 281 331.2 282.4 332.9 283.6C334.7 284.8 336.4 284.6 338.2 285.8C339.9 287.1 341.7 289.8 343.4 291.2C345.1 292.5 346.9 292.2 348.6 293.8C350.4 295.4 352.1 297.9 353.9 300.7C355.6 303.5 357.4 306 359.1 310.7C360.9 315.3 362.6 323.6 364.4 328.5C366.1 333.3 367.9 334.5 369.6 339.8C371.3 345.1 373.1 351.1 374.8 360.2C376.6 369.4 378.3 387.5 380.1 394.7C381.8 401.9 383.6 397.4 385.3 403.4C387.1 409.4 388.8 423.9 390.6 430.5C392.3 437.2 394.1 436.8 395.8 443.3C397.5 449.8 399.3 461.4 401 469.3C402.8 477.3 404.5 482.9 406.3 491C408 499 409.8 507.9 411.5 517.9C413.3 527.9 415 543.7 416.8 550.7C418.5 557.8 420.3 559.1 422 560.2C423.7 561.3 425.5 558.8 427.2 557.5C429 556.2 430.7 552.5 432.5 552.5C434.2 552.5 436 556.8 437.7 557.7C439.5 558.6 441.2 557.1 443 557.9C444.7 558.7 446.5 560.2 448.2 562.6C449.9 565.1 451.7 569.6 453.4 572.6C455.2 575.6 456.9 577.4 458.7 580.5C460.4 583.7 462.2 590.4 463.9 591.6C465.7 592.8 467.4 589.8 469.2 587.7C470.9 585.6 472.7 582.3 474.4 579.1C476.1 575.9 477.9 571.7 479.6 568.5C481.4 565.3 483.1 563.1 484.9 559.9C486.6 556.7 488.4 552.8 490.1 549.4C491.9 546 493.6 541.7 495.4 539.5C497.1 537.2 498.9 536.3 500.6 535.8C502.3 535.4 504.1 537 505.8 536.8C507.6 536.6 509.3 534.6 511.1 534.7C512.8 534.9 514.6 536.7 516.3 537.8C518.1 538.9 519.8 540 521.6 541.4C523.3 542.7 525.1 542.5 526.8 545.7C528.5 548.9 530.3 556.7 532 560.5C533.8 564.4 535.5 568.3 537.3 568.7C539 569.2 540.8 565.6 542.5 563.2C544.3 560.7 546 555.1 547.8 554.2C549.5 553.2 551.3 555.5 553 557.6C554.7 559.7 556.5 563.9 558.2 566.6C560 569.3 561.7 571.1 563.5 573.8C565.2 576.4 567 578.8 568.7 582.4C570.5 586 572.2 592.5 574 595.5C575.7 598.5 577.5 598.5 579.2 600.3C580.9 602 582.7 603.5 584.4 605.9C586.2 608.4 587.9 612.1 589.7 615C591.4 618 593.2 622.3 594.9 623.7C596.7 625 598.4 622.4 600.2 623.3C601.9 624.2 603.7 628.4 605.4 628.9C607.1 629.5 608.9 626.5 610.6 626.5C612.4 626.4 614.1 628 615.9 628.5C617.6 628.9 619.4 630.2 621.1 629C622.9 627.8 624.6 623.7 626.4 621.2C628.1 618.8 629.9 618 631.6 614.2C633.3 610.3 635.1 601.9 636.8 598.2C638.6 594.4 640.3 594 642.1 591.6C643.8 589.3 645.6 585.8 647.3 584.1C649.1 582.5 650.8 582.1 652.6 581.5C654.3 580.9 656.1 582 657.8 580.7C659.5 579.5 661.3 577.2 663 574C664.8 570.9 666.5 566.5 668.3 561.8C670 557 671.8 550.5 673.5 545.3C675.3 540.1 677 535.5 678.8 530.5C680.5 525.6 682.3 521.5 684 515.8C685.7 510.1 687.5 501.5 689.2 496.4C691 491.2 692.7 487.3 694.5 484.9C696.2 482.6 698 482.9 699.7 482.5C701.5 482.1 703.2 481.9 705 482.5C706.7 483 708.5 485.8 710.2 485.8C711.9 485.8 713.7 483.8 715.4 482.4C717.2 481 718.9 478.9 720.7 477.5C722.4 476 724.2 475 725.9 473.8C727.7 472.7 729.4 470.8 731.2 470.6C732.9 470.5 734.7 472.3 736.4 473.1C738.1 473.9 739.9 473.8 741.6 475.2C743.4 476.7 745.1 480.2 746.9 481.7C748.6 483.1 750.4 482.4 752.1 483.7C753.9 485 755.6 488.4 757.4 489.4C759.1 490.4 760.9 488.9 762.6 489.7C764.3 490.6 766.1 493.5 767.8 494.4C769.6 495.3 771.3 495.1 773.1 495.2C774.8 495.3 776.6 495.1 778.3 495C780.1 494.9 781.8 496.3 783.6 494.6C785.3 493 787.1 487 788.8 485.2C790.5 483.4 792.3 485 794 483.7C795.8 482.5 797.5 479.1 799.3 477.9C801 476.7 802.8 477.2 804.5 476.4C806.3 475.7 808 474.1 809.8 473.5C811.5 472.9 813.3 473.3 815 472.8C816.7 472.2 818.5 471.3 820.2 470.1C822 468.9 823.7 466.5 825.5 465.6C827.2 464.6 829 464.9 830.7 464.4C832.5 463.9 834.2 463.2 836 462.5C837.7 461.8 839.5 461.5 841.2 460.1C842.9 458.7 844.7 455.4 846.4 454C848.2 452.5 849.9 451.8 851.7 451.4C853.4 450.9 855.2 451.3 856.9 451.2C858.7 451.1 860.4 451.9 862.2 450.7C863.9 449.4 865.7 445.4 867.4 443.6C869.1 441.7 870.9 441.5 872.6 439.5C874.4 437.5 876.1 433.1 877.9 431.6C879.6 430 881.4 429.5 883.1 430C884.9 430.6 886.6 433.2 888.4 434.8C890.1 436.5 891.9 437.9 893.6 440C895.3 442.1 897.1 445.3 898.8 447.4C900.6 449.5 902.3 451.2 904.1 452.6C905.8 454.1 907.6 455 909.3 456.3C911.1 457.5 912.8 459.2 914.6 460.1C916.3 461 918.1 461 919.8 461.6C921.5 462.2 923.3 462.9 925 463.8C926.8 464.7 928.5 465.5 930.3 467C932 468.5 933.8 470.9 935.5 472.6C937.3 474.2 939 474.8 940.8 476.8C942.5 478.8 944.3 482.3 946 484.3C947.7 486.4 949.5 487.6 951.2 489.1C953 490.5 954.7 491.9 956.5 493.3C958.2 494.7 960 496.1 961.7 497.4C963.5 498.6 965.2 500.2 967 500.7C968.7 501.1 970.5 500.3 972.2 500.1C973.9 499.9 975.7 499.2 977.4 499.5C979.2 499.9 980.9 501.9 982.7 502C984.4 502.1 986.2 500.8 987.9 500C989.7 499.2 991.4 497.3 993.2 497.2C994.9 497.2 996.7 499.5 998.4 499.8C1000.1 500.2 1001.9 499.6 1003.6 499.3C1005.4 499 1007.1 499.3 1008.9 498.1C1010.6 497 1012.4 494.1 1014.1 492.4C1015.9 490.7 1017.6 488.8 1019.4 487.7C1021.1 486.7 1022.9 486.6 1024.6 486.2C1026.3 485.9 1028.1 485 1029.8 485.6C1031.6 486.2 1033.3 488.2 1035.1 489.9C1036.8 491.7 1038.6 494.4 1040.3 496C1042.1 497.6 1043.8 498.1 1045.6 499.3C1047.3 500.5 1049.1 502.1 1050.8 503.2C1052.5 504.4 1054.3 505.6 1056 506.4C1057.8 507.3 1059.5 507.4 1061.3 508.6C1063 509.8 1064.8 511.9 1066.5 513.8C1068.3 515.7 1070 518.2 1071.8 519.9C1073.5 521.7 1075.3 522.5 1077 524.3C1078.7 526.1 1080.5 529.3 1082.2 530.9C1084 532.4 1085.7 532.8 1087.5 533.7C1089.2 534.5 1091 535.3 1092.7 536C1094.5 536.8 1096.2 537.1 1098 538.3C1099.7 539.5 1101.5 541.8 1103.2 543.1C1104.9 544.5 1106.7 545.6 1108.4 546.4C1110.2 547.3 1111.9 548 1113.7 548.4C1115.4 548.8 1117.2 548.9 1118.9 548.6C1120.7 548.4 1122.4 547.5 1124.2 547C1125.9 546.6 1127.7 546 1129.4 545.9C1131.1 545.8 1132.9 547.5 1134.6 546.5C1136.4 545.5 1138.1 542 1139.9 539.9C1141.6 537.9 1143.4 536.1 1145.1 534.3C1146.9 532.4 1148.6 530.5 1150.4 528.7C1152.1 527 1153.9 525.1 1155.6 523.9C1157.3 522.7 1159.1 521.8 1160.8 521.5C1162.6 521.2 1164.3 522.1 1166.1 522C1167.8 521.8 1169.6 522 1171.3 520.5C1173.1 519 1174.8 515.7 1176.6 513.3C1178.3 510.8 1180.1 509.3 1181.8 506C1183.5 502.7 1185.3 497.2 1187 493.5C1188.8 489.8 1190.5 486.9 1192.3 483.8C1194 480.7 1195.8 476.8 1197.5 474.7C1199.3 472.7 1201 471.2 1202.8 471.6C1204.5 472.1 1206.3 475.5 1208 477.5C1209.7 479.5 1211.5 481.2 1213.2 483.7C1215 486.3 1216.7 490.8 1218.5 492.8C1220.2 494.7 1222 494.5 1223.7 495.5C1225.5 496.5 1227.2 498.1 1229 498.7C1230.7 499.3 1232.5 498.8 1234.2 498.9C1235.9 499.1 1237.7 501.7 1239.4 499.7C1241.2 497.7 1242.9 492.4 1244.7 486.9C1246.4 481.5 1248.2 472.8 1249.9 466.9C1251.7 461 1253.4 455.2 1255.2 451.7C1256.9 448.2 1258.7 448.4 1260.4 445.8C1262.1 443.2 1263.9 440.2 1265.6 436.2C1267.4 432.2 1269.1 426.3 1270.9 421.9C1272.6 417.6 1274.4 412.9 1276.1 410.1C1277.9 407.3 1279.6 406.6 1281.4 405.1C1283.1 403.6 1284.9 402.1 1286.6 401.2C1288.3 400.2 1290.1 400.1 1291.8 399.5C1293.6 398.9 1295.3 399.2 1297.1 397.6C1298.8 395.9 1300.6 391.8 1302.3 389.7C1304.1 387.6 1305.8 386.1 1307.6 385.1C1309.3 384.1 1311.1 384.2 1312.8 383.8C1314.5 383.4 1316.3 382.5 1318 382.7C1319.8 382.9 1321.5 385.7 1323.3 385.1C1325 384.5 1326.8 381.2 1328.5 379.2C1330.3 377.2 1332 374.7 1333.8 373.1C1335.5 371.6 1337.3 371 1339 369.8C1340.7 368.6 1343.4 366.7 1344.2 366" fill="none" stroke="#00f000" stroke-width="2.3" stroke-linejoin="round"/>
<path d="M652.5 422H1860" stroke="#c4bc00" stroke-width="1.9" fill="none"/>
<path d="M652.5 424.8L1620.7 311.4" stroke="#fff" stroke-width="3.6" fill="none"/>
<path d="M636.5 497.6L1458.8 617.4" stroke="#fff" stroke-width="3.6" fill="none"/>
<path d="M866 399.5H1348.6" stroke="#c000c0" stroke-width="1.8" fill="none" opacity="0.8"/>
<path d="M1233.5 396.2L1358.3 307.7" stroke="#f0e800" stroke-width="2.9" fill="none"/>
<g fill="#f4f4f4"><rect x="-1.9" y="-1.9" width="3.8" height="3.8" transform="translate(889.6 403.5) rotate(21.5)"/><rect x="-1.9" y="-1.9" width="3.8" height="3.8" transform="translate(900.1 407.6) rotate(21.5)"/><rect x="-1.9" y="-1.9" width="3.8" height="3.8" transform="translate(910.5 411.8) rotate(21.5)"/><rect x="-1.9" y="-1.9" width="3.8" height="3.8" transform="translate(921 415.9) rotate(21.5)"/><rect x="-1.9" y="-1.9" width="3.8" height="3.8" transform="translate(931.5 420) rotate(21.5)"/><rect x="-1.9" y="-1.9" width="3.8" height="3.8" transform="translate(942 424.1) rotate(21.5)"/><rect x="-1.9" y="-1.9" width="3.8" height="3.8" transform="translate(952.4 428.3) rotate(21.5)"/><rect x="-1.9" y="-1.9" width="3.8" height="3.8" transform="translate(962.9 432.4) rotate(21.5)"/><rect x="-1.9" y="-1.9" width="3.8" height="3.8" transform="translate(973.4 436.5) rotate(21.5)"/><rect x="-1.9" y="-1.9" width="3.8" height="3.8" transform="translate(983.8 440.6) rotate(21.5)"/><rect x="-1.9" y="-1.9" width="3.8" height="3.8" transform="translate(994.3 444.8) rotate(21.5)"/><rect x="-1.9" y="-1.9" width="3.8" height="3.8" transform="translate(1004.8 448.9) rotate(21.5)"/><rect x="-1.9" y="-1.9" width="3.8" height="3.8" transform="translate(1015.2 453) rotate(21.5)"/><rect x="-1.9" y="-1.9" width="3.8" height="3.8" transform="translate(1025.7 457.1) rotate(21.5)"/><rect x="-1.9" y="-1.9" width="3.8" height="3.8" transform="translate(1036.2 461.3) rotate(21.5)"/><rect x="-1.9" y="-1.9" width="3.8" height="3.8" transform="translate(1046.7 465.4) rotate(21.5)"/><rect x="-1.9" y="-1.9" width="3.8" height="3.8" transform="translate(1057.1 469.5) rotate(21.5)"/><rect x="-1.9" y="-1.9" width="3.8" height="3.8" transform="translate(1067.6 473.6) rotate(21.5)"/><rect x="-1.9" y="-1.9" width="3.8" height="3.8" transform="translate(1078.1 477.8) rotate(21.5)"/><rect x="-1.9" y="-1.9" width="3.8" height="3.8" transform="translate(1088.5 481.9) rotate(21.5)"/><rect x="-1.9" y="-1.9" width="3.8" height="3.8" transform="translate(1099 486) rotate(21.5)"/><rect x="-1.9" y="-1.9" width="3.8" height="3.8" transform="translate(1109.5 490.2) rotate(21.5)"/><rect x="-1.9" y="-1.9" width="3.8" height="3.8" transform="translate(1120 494.3) rotate(21.5)"/><rect x="-1.9" y="-1.9" width="3.8" height="3.8" transform="translate(1130.4 498.4) rotate(21.5)"/><rect x="-1.9" y="-1.9" width="3.8" height="3.8" transform="translate(1140.9 502.5) rotate(21.5)"/><rect x="-1.9" y="-1.9" width="3.8" height="3.8" transform="translate(1151.4 506.7) rotate(21.5)"/><rect x="-1.9" y="-1.9" width="3.8" height="3.8" transform="translate(1161.8 510.8) rotate(21.5)"/><rect x="-1.9" y="-1.9" width="3.8" height="3.8" transform="translate(1172.3 514.9) rotate(21.5)"/><rect x="-1.9" y="-1.9" width="3.8" height="3.8" transform="translate(1182.8 519) rotate(21.5)"/><rect x="-1.9" y="-1.9" width="3.8" height="3.8" transform="translate(1193.2 523.2) rotate(21.5)"/><rect x="-1.9" y="-1.9" width="3.8" height="3.8" transform="translate(1203.7 527.3) rotate(21.5)"/><rect x="-1.9" y="-1.9" width="3.8" height="3.8" transform="translate(1214.2 531.4) rotate(21.5)"/><rect x="-1.9" y="-1.9" width="3.8" height="3.8" transform="translate(1224.7 535.5) rotate(21.5)"/><rect x="-1.9" y="-1.9" width="3.8" height="3.8" transform="translate(1235.1 539.7) rotate(21.5)"/><rect x="-1.9" y="-1.9" width="3.8" height="3.8" transform="translate(1245.6 543.8) rotate(21.5)"/><rect x="-1.9" y="-1.9" width="3.8" height="3.8" transform="translate(784.2 476.5) rotate(15.6)"/><rect x="-1.9" y="-1.9" width="3.8" height="3.8" transform="translate(795 479.5) rotate(15.6)"/><rect x="-1.9" y="-1.9" width="3.8" height="3.8" transform="translate(805.9 482.5) rotate(15.6)"/><rect x="-1.9" y="-1.9" width="3.8" height="3.8" transform="translate(816.7 485.6) rotate(15.6)"/><rect x="-1.9" y="-1.9" width="3.8" height="3.8" transform="translate(827.6 488.6) rotate(15.6)"/><rect x="-1.9" y="-1.9" width="3.8" height="3.8" transform="translate(838.4 491.6) rotate(15.6)"/><rect x="-1.9" y="-1.9" width="3.8" height="3.8" transform="translate(849.2 494.6) rotate(15.6)"/><rect x="-1.9" y="-1.9" width="3.8" height="3.8" transform="translate(860.1 497.7) rotate(15.6)"/><rect x="-1.9" y="-1.9" width="3.8" height="3.8" transform="translate(870.9 500.7) rotate(15.6)"/><rect x="-1.9" y="-1.9" width="3.8" height="3.8" transform="translate(881.8 503.7) rotate(15.6)"/><rect x="-1.9" y="-1.9" width="3.8" height="3.8" transform="translate(892.6 506.7) rotate(15.6)"/><rect x="-1.9" y="-1.9" width="3.8" height="3.8" transform="translate(903.4 509.8) rotate(15.6)"/><rect x="-1.9" y="-1.9" width="3.8" height="3.8" transform="translate(914.3 512.8) rotate(15.6)"/><rect x="-1.9" y="-1.9" width="3.8" height="3.8" transform="translate(925.1 515.8) rotate(15.6)"/><rect x="-1.9" y="-1.9" width="3.8" height="3.8" transform="translate(936 518.8) rotate(15.6)"/><rect x="-1.9" y="-1.9" width="3.8" height="3.8" transform="translate(946.8 521.9) rotate(15.6)"/><rect x="-1.9" y="-1.9" width="3.8" height="3.8" transform="translate(957.6 524.9) rotate(15.6)"/><rect x="-1.9" y="-1.9" width="3.8" height="3.8" transform="translate(968.5 527.9) rotate(15.6)"/><rect x="-1.9" y="-1.9" width="3.8" height="3.8" transform="translate(979.3 530.9) rotate(15.6)"/><rect x="-1.9" y="-1.9" width="3.8" height="3.8" transform="translate(990.2 534) rotate(15.6)"/><rect x="-1.9" y="-1.9" width="3.8" height="3.8" transform="translate(1001 537) rotate(15.6)"/><rect x="-1.9" y="-1.9" width="3.8" height="3.8" transform="translate(1011.9 540) rotate(15.6)"/><rect x="-1.9" y="-1.9" width="3.8" height="3.8" transform="translate(1022.7 543) rotate(15.6)"/><rect x="-1.9" y="-1.9" width="3.8" height="3.8" transform="translate(1033.5 546) rotate(15.6)"/><rect x="-1.9" y="-1.9" width="3.8" height="3.8" transform="translate(1044.4 549.1) rotate(15.6)"/><rect x="-1.9" y="-1.9" width="3.8" height="3.8" transform="translate(1055.2 552.1) rotate(15.6)"/><rect x="-1.9" y="-1.9" width="3.8" height="3.8" transform="translate(1066.1 555.1) rotate(15.6)"/><rect x="-1.9" y="-1.9" width="3.8" height="3.8" transform="translate(1076.9 558.1) rotate(15.6)"/><rect x="-1.9" y="-1.9" width="3.8" height="3.8" transform="translate(1087.7 561.2) rotate(15.6)"/><rect x="-1.9" y="-1.9" width="3.8" height="3.8" transform="translate(1098.6 564.2) rotate(15.6)"/><rect x="-1.9" y="-1.9" width="3.8" height="3.8" transform="translate(1109.4 567.2) rotate(15.6)"/><rect x="-1.9" y="-1.9" width="3.8" height="3.8" transform="translate(1120.3 570.2) rotate(15.6)"/><rect x="-1.9" y="-1.9" width="3.8" height="3.8" transform="translate(1131.1 573.3) rotate(15.6)"/><rect x="-1.9" y="-1.9" width="3.8" height="3.8" transform="translate(1141.9 576.3) rotate(15.6)"/><rect x="-1.9" y="-1.9" width="3.8" height="3.8" transform="translate(1152.8 579.3) rotate(15.6)"/><rect x="-1.9" y="-1.9" width="3.8" height="3.8" transform="translate(1163.6 582.3) rotate(15.6)"/><rect x="-1.9" y="-1.9" width="3.8" height="3.8" transform="translate(1174.5 585.4) rotate(15.6)"/><rect x="-1.9" y="-1.9" width="3.8" height="3.8" transform="translate(1185.3 588.4) rotate(15.6)"/><rect x="-1.9" y="-1.9" width="3.8" height="3.8" transform="translate(1196.1 591.4) rotate(15.6)"/><rect x="-1.9" y="-1.9" width="3.8" height="3.8" transform="translate(1207 594.4) rotate(15.6)"/><rect x="-1.9" y="-1.9" width="3.8" height="3.8" transform="translate(1217.8 597.5) rotate(15.6)"/><rect x="-1.9" y="-1.9" width="3.8" height="3.8" transform="translate(1228.7 600.5) rotate(15.6)"/><rect x="-1.9" y="-1.9" width="3.8" height="3.8" transform="translate(1239.5 603.5) rotate(15.6)"/></g>
<path d="M1223.8 536.3L1281 585.9L1260 604.5Z" fill="#8a0000" fill-opacity="0.6" stroke="#f01010" stroke-width="2" stroke-linejoin="round"/>
<g fill="#ff0a0a"><path d="M1194.8 401.3H1201.6V408.4H1205.6L1198.2 416.5L1190.8 408.4H1194.8Z"/><path d="M1262.2 348.9H1269V355.9H1273L1265.6 363.7L1258.2 355.9H1262.2Z"/><path d="M1298.3 323.8H1305.1V330.8H1309.1L1301.7 338.6L1294.3 330.8H1298.3Z"/></g>
<circle cx="1343.7" cy="708.8" r="3.6" fill="#3cc070"/>
</g>
<path d="M1858 350.9L1869 342.7H1912V359.2H1869Z" fill="#fff"/><text x="1909" y="356.1" class="tg">25,80</text>
<path d="M1858 367.1L1869 359.2H1912V375H1869Z" fill="#00ee00"/><text x="1909" y="372.3" class="tg">25,27</text>
<path d="M1858 386.1L1869 377.5H1912V394.6H1869Z" fill="#00eeee"/><text x="1909" y="391.2" class="tg">24,58</text>
<path d="M5 815.5H1860M5 890.5H1860" stroke="#262626" stroke-width="1.2"/>
<text x="1910" y="823" class="pl">70,00</text><text x="1910" y="898" class="pl">30,00</text>
<g clip-path="url(#rc)"><polyline points="5,867.5 8,873.3 13.3,864.4 18.5,867.7 23.8,865.5 29,861.1 34.2,857.6 39.5,844.9 44.7,842.7 50,849.1 55.2,844.6 60.4,845.9 65.7,850.5 70.9,843.4 76.2,842.8 81.4,855.2 86.6,843.9 91.9,829.6 97.1,822.7 102.4,829.1 107.6,826.8 112.8,821.3 118.1,824.4 123.3,826 128.6,812 133.8,812 139,825.8 144.3,836.3 149.5,849.6 154.8,858.9 160,868.5 165.2,862.8 170.5,862.6 175.7,871.7 181,863.4 186.2,850.5 191.4,860.6 196.7,874.3 201.9,872.9 207.2,860.4 212.4,863.2 217.6,872.3 222.9,872.3 228.1,877.9 233.4,872.1 238.6,878.4 243.8,876.2 249.1,874.6 254.3,863.1 259.6,865.8 264.8,863 270,857.4 275.3,850.7 280.5,858.4 285.8,869.2 291,879.2 296.2,882 301.5,884.3 306.7,874.6 312,879.9 317.2,883 322.4,900 327.7,901.1 332.9,889 338.2,881.7 343.4,889.2 348.6,882.8 353.9,892.2 359.1,899.1 364.4,910.4 369.6,899.9 374.8,910.3 380.1,920.4 385.3,884.3 390.6,897.2 395.8,885.2 401,893.8 406.3,893.9 411.5,898.2 416.8,902.6 422,884.5 427.2,875.4 432.5,872.9 437.7,878.4 443,874.7 448.2,877.6 453.4,881.3 458.7,881.1 463.9,884 469.2,870.7 474.4,865.3 479.6,861.7 484.9,861.5 490.1,857.6 495.4,855.7 500.6,860.5 505.8,864.7 511.1,861.1 516.3,866.4 521.6,867.7 526.8,869.4 532,881.1 537.3,875.2 542.5,859 547.8,853.6 553,865.5 558.2,871.5 563.5,871.4 568.7,874.2 574,879.9 579.2,871.6 584.4,873.4 589.7,877.8 594.9,879.1 600.2,868 605.4,874.3 610.6,864.5 615.9,868.9 621.1,867.4 626.4,856 631.6,854.8 636.8,842.1 642.1,850.8 647.3,848 652.6,852.9 657.8,854.9 663,846.4 668.3,837.8 673.5,830.3 678.8,828.3 684,824.9 689.2,817.2 694.5,825.4 699.7,838.4 705,842 710.2,848.1 715.4,839.7 720.7,836.7 725.9,837.4 731.2,836.9 736.4,847.8 741.6,848.1 746.9,857.7 752.1,851.8 757.4,859.5 762.6,851.7 767.8,859.8 773.1,854.4 778.3,852.7 783.6,852.5 788.8,836.4 794,849.3 799.3,841.8 804.5,848.3 809.8,845.3 815,848.8 820.2,845 825.5,840.7 830.7,846.6 836,844.8 841.2,842.9 846.4,834.8 851.7,841.2 856.9,846.5 862.2,845.6 867.4,832.2 872.6,836.8 877.9,828.2 883.1,842 888.4,856.3 893.6,859.1 898.8,865.8 904.1,864 909.3,862.5 914.6,864.6 919.8,860.2 925,862.7 930.3,866.4 935.5,873.5 940.8,872.6 946,881.6 951.2,876.9 956.5,877.9 961.7,879.5 967,879.5 972.2,867.3 977.4,866.7 982.7,875.1 987.9,860.7 993.2,856.9 998.4,870.7 1003.6,862 1008.9,859.8 1014.1,846 1019.4,845.6 1024.6,853.1 1029.8,855.1 1035.1,869.3 1040.3,875.6 1045.6,870.1 1050.8,873.4 1056,873.5 1061.3,871.7 1066.5,881 1071.8,885.6 1077,883.3 1082.2,890.1 1087.5,879.7 1092.7,879.9 1098,880.9 1103.2,888.5 1108.4,885.8 1113.7,882.2 1118.9,875.9 1124.2,867.7 1129.4,868.3 1134.6,873.5 1139.9,846 1145.1,844.5 1150.4,841.2 1155.6,839.6 1160.8,846.6 1166.1,856.9 1171.3,849.6 1176.6,831.2 1181.8,827.5 1187,813.8 1192.3,814.6 1197.5,812.1 1202.8,830.7 1208,857.8 1213.2,861.9 1218.5,871.1 1223.7,858.7 1229,861.1 1234.2,855.1 1239.4,856.6 1244.7,829.5 1249.9,816.5 1255.2,817.9 1260.4,834 1265.6,827.1 1270.9,818.9 1276.1,818.1 1281.4,830 1286.6,830 1291.8,834 1297.1,833.1 1302.3,823 1307.6,827.8 1312.8,834.8 1318,834.8 1323.3,844.3 1328.5,829.8 1333.8,827.6 1339,832.1 1344.2,830.1" fill="none" stroke="#f0f0f0" stroke-width="2.3" stroke-linejoin="round"/>
<path d="M1171.2 812L1391.2 822.5" stroke="#f0e800" stroke-width="2.6" fill="none"/>
<g fill="#ff0a0a"><path d="M1188.6 782.5H1195.4V789.5H1199.4L1192 797.5L1184.6 789.5H1188.6Z"/><path d="M1267.1 796H1273.9V803H1277.9L1270.5 811L1263.1 803H1267.1Z"/><path d="M1298.6 790H1305.4V797H1309.4L1302 805L1294.6 797H1298.6Z"/></g></g>
<path d="M1858 831L1869 822H1912V840H1869Z" fill="#fff"/><text x="1909" y="836.5" class="tg">63,41</text>
</svg>
<div id="tabs" class="a"></div>
<div class="a" style="left:1861px;top:956px;width:54px;height:46px;background:#f0f0f0"></div>
<svg class="a" style="left:0;top:0" width="1920" height="64" viewBox="0 0 1920 64">
<defs>
<linearGradient id="ig" x1="0" y1="0" x2="0" y2="1"><stop offset="0" stop-color="#ececec"/><stop offset="1" stop-color="#b9b9b9"/></linearGradient>
<linearGradient id="ib" x1="0" y1="0" x2="0" y2="1"><stop offset="0" stop-color="#15c8ee"/><stop offset="1" stop-color="#0a90c8"/></linearGradient>
<linearGradient id="cg" x1="0" y1="0" x2="1" y2="0"><stop offset="0" stop-color="#10e0f8"/><stop offset="1" stop-color="#0890c8"/></linearGradient>
</defs>
<rect x="7.5" y="12" width="20" height="15" rx="3" fill="url(#ig)"/>
<rect x="7" y="7" width="21" height="5.5" rx="2.5" fill="url(#ib)"/>
<polyline points="9,22 14.5,15.5 20.5,23 26,17" fill="none" stroke="#2a2a2a" stroke-width="1.4"/>
<polyline points="31.5,19.5 36.8,14.2 42.2,19.5" fill="none" stroke="#777" stroke-width="1.3"/>
<path d="M46.5 32V6.5H178.5V32" fill="#fff" stroke="#d2d2d2" stroke-width="1"/>
<path d="M1 31.5H46.5M178.5 31.5H1919" stroke="#cfcfcf" stroke-width="1"/>
<path d="M163 16L170 23M170 16L163 23" stroke="#222" stroke-width="1.7"/>
<path d="M185 18.5H197M191 12.5V24.5" stroke="#222" stroke-width="2.3"/>
<!-- right title icons -->
<path d="M1757 14.5H1753.5V22.5H1765.5V19" fill="none" stroke="#111" stroke-width="1.3"/>
<path d="M1758.5 19.5L1765 13" stroke="#111" stroke-width="1.5"/><path d="M1761 10.5H1767V16.5Z" fill="#111"/>
<path d="M1766 23.5L1769 20.5V23.5Z" fill="#111"/>
<circle cx="1785.5" cy="17" r="6.2" fill="none" stroke="#111" stroke-width="1.3"/>
<path d="M1785.5 12.8V17.6H1789.5" fill="none" stroke="#111" stroke-width="1.3"/>
<path d="M1794 23.5L1797 20.5V23.5Z" fill="#111"/>
<polyline points="1805,19.8 1809,16 1813,19.5 1818.5,14" fill="none" stroke="#111" stroke-width="1.6"/>
<path d="M1817 12H1822.5V17.5Z" fill="#111"/>
<path d="M1820 23.5L1823 20.5V23.5Z" fill="#111"/>
<path d="M1837 17H1848" stroke="#111" stroke-width="1.2"/>
<rect x="1863.5" y="12.5" width="10" height="9.5" fill="none" stroke="#111" stroke-width="1.1"/>
<path d="M1866 12.5V10H1876V19.5H1873.5" fill="none" stroke="#111" stroke-width="1.1"/>
<path d="M1895.5 11.5L1905 21M1905 11.5L1895.5 21" stroke="#111" stroke-width="1.2"/>
<!-- toolbar icons -->
<circle cx="17.5" cy="46" r="9.2" fill="none" stroke="#1fb0e0" stroke-width="1.6"/>
<path d="M17 41.2V46.6H21.2" fill="none" stroke="#444" stroke-width="1.9"/>
<path d="M124.8 44.8H131.6L128.2 48.8Z" fill="#111"/>
<path d="M145.5 35V57" stroke="#c4c4c4" stroke-width="1"/>
<path d="M169.3 36V56" stroke="#169a3c" stroke-width="1.2"/>
<rect x="166.5" y="39.5" width="5.8" height="14.5" rx="1" fill="#05e8a8" stroke="#1a9a30" stroke-width="1.1"/>
<text x="175" y="56.5" style="font-size:10.5px;fill:#555">A</text>
<path d="M282.6 44.8H289.4L286 48.8Z" fill="#111"/>
<path d="M303.5 35V57" stroke="#c4c4c4" stroke-width="1"/>
<path d="M324 40.5H337M329 54.6H342" stroke="#ff3a3a" stroke-width="1.6"/>
<path d="M323.3 55.4C325 50 326.5 46.8 328.8 46.8C331.5 46.8 333 49.2 336 48.6C339.5 47.5 340.5 43 340.9 37.6" fill="none" stroke="#1aa0d8" stroke-width="1.6"/>
<path d="M431.2 44.8H438L434.6 48.8Z" fill="#111"/>
<g fill="none" stroke="#555" stroke-width="1.3">
<circle cx="457" cy="44.8" r="7.6"/><path d="M451.6 50.4L447 55"/>
<circle cx="486" cy="44.8" r="7.6"/><path d="M480.6 50.4L476 55"/>
<circle cx="514.5" cy="44.6" r="7.6"/><path d="M509.1 50.2L504.5 54.6"/>
</g>
<g fill="none" stroke="#8a8a8a" stroke-width="1"><circle cx="543.5" cy="44.6" r="7.6"/><path d="M538 50.2L534 54"/></g>
<path d="M453 44.8H461M457 40.8V48.8" stroke="#1a9ad8" stroke-width="2.2"/>
<path d="M482 44.8H490" stroke="#1a9ad8" stroke-width="2.2"/>
<rect x="513" y="47" width="11" height="9.5" fill="#12a8dc" stroke="#0a6a9a" stroke-width="0.8"/>
<circle cx="546" cy="50" r="5" fill="#f0f0f0" stroke="#2cb870" stroke-width="1.2"/>
<path d="M546 47.2V50.5H548.5" fill="none" stroke="#333" stroke-width="0.9"/>
<path d="M556.8 45.4H563.2L560 49.2Z" fill="#111"/>
<path d="M577 35V57" stroke="#c4c4c4" stroke-width="1"/>
<path d="M598.5 53.5L611.5 40.5" stroke="#555" stroke-width="4.2"/><path d="M596.8 56.5L597.2 52L600.2 55.2Z" fill="#555"/>
<path d="M607 55H616" stroke="#555" stroke-width="1.6"/>
<path d="M631 35V57" stroke="#c4c4c4" stroke-width="1"/>
<path d="M650.5 47.5Q660 38.5 669.5 47.5Q660 56.5 650.5 47.5Z" fill="#444"/>
<circle cx="660" cy="47.5" r="2.8" fill="#f0f0f0"/><circle cx="660" cy="47" r="0.9" fill="#444"/>
<path d="M673.8 45.6H680.2L677 49.4Z" fill="#111"/>
<rect x="1887" y="37.5" width="21" height="20" rx="2.8" fill="#111"/>
<path d="M1889.8 37.5H1896V57.5H1889.8A2.8 2.8 0 0 1 1887 54.7V40.3A2.8 2.8 0 0 1 1889.8 37.5Z" fill="url(#ib)"/>
<rect x="1899" y="41.5" width="6.2" height="2" fill="#bbb"/>
<rect x="1899" y="46.5" width="2.4" height="2" fill="#f0c000"/><rect x="1902.6" y="46.5" width="2.4" height="2" fill="#20c040"/>
<rect x="1899" y="51" width="6.2" height="2" fill="#f02020"/>
<!-- chart header icons -->
</svg>
<div class="a" style="left:71px;top:11px;font-size:14px;font-weight:bold;color:#0a0a14;white-space:nowrap;transform:scaleX(0.9754);transform-origin:0 0;">BBDC4 1D</div>
<div class="a" style="left:1673px;top:10px;font-size:14px;color:#1a1a1a;white-space:nowrap">04/12/2020</div>
<div class="a t13" style="left:59px;top:39px;font-size:14px;transform:scaleX(0.9021);transform-origin:0 0;">1 Dia</div>
<div class="a t13" style="left:197.5px;top:39px;font-size:14px;transform:scaleX(0.9500);transform-origin:0 0;">Automático</div>
<div class="a t13" style="left:350.5px;top:39px;font-size:14px;transform:scaleX(0.9669);transform-origin:0 0;">Indicadores</div>
<svg class="a" style="left:1840px;top:70px" width="75" height="24" viewBox="1840 70 75 24">
<path d="M1847 82.8H1859" stroke="#d8d8d8" stroke-width="1.3"/>
<rect x="1871.6" y="75.6" width="12" height="11.5" fill="none" stroke="#d8d8d8" stroke-width="1.3"/>
<path d="M1897.5 76.8L1907.5 86.6M1907.5 76.8L1897.5 86.6" stroke="#d8d8d8" stroke-width="1.3"/>
</svg>
<svg class="a" style="left:1840px;top:732px" width="75" height="24" viewBox="1840 732 75 24">
<path d="M1847 744.8H1859" stroke="#d8d8d8" stroke-width="1.3"/>
<rect x="1871.6" y="737.6" width="12" height="11.5" fill="none" stroke="#d8d8d8" stroke-width="1.3"/>
<path d="M1897.5 738.8L1907.5 748.6M1907.5 738.8L1897.5 748.6" stroke="#d8d8d8" stroke-width="1.3"/>
</svg>
<div class="a hb" style="left:15px;top:73px;color:#e4e4e4;letter-spacing:0">BBDC4</div>
<div class="a hb" style="left:316.4px;top:73px;color:#e4e4e4;transform:scaleX(1.0272);transform-origin:0 0;">Média Móvel A [21]</div>
<div class="a hb" style="left:67.5px;top:73px;color:#9cc0ee;">(26,02</div>
<div class="a hb" style="left:120px;top:73px;color:#9cc0ee;">26,08</div>
<div class="a hb" style="left:167px;top:73px;color:#9cc0ee;">25,45</div>
<div class="a hb" style="left:213.9px;top:73px;color:#9cc0ee;">25,80</div>
<div class="a hb" style="left:260.8px;top:73px;color:#9cc0ee;">0,86%)<span style="color:#e4e4e4">,</span></div>
<div class="a hb" style="left:460.8px;top:73px;color:#9cc0ee;">(24,58)<span style="color:#e4e4e4">,</span></div>
<div class="a hb" style="left:518.8px;top:73px;color:#e4e4e4;">Média Móvel E [9]</div>
<div class="a hb" style="left:650px;top:73px;color:#9cc0ee;">(25,27)</div>
<div class="a hb" style="left:15px;top:735px;color:#e4e4e4;"><span style="letter-spacing:0">IFR</span></div>
<div class="a hb" style="left:41.2px;top:735px;color:#e4e4e4;">(RSI)</div>
<div class="a hb" style="left:79.7px;top:735px;color:#e4e4e4;">[14]</div>
<div class="a hb" style="left:111.5px;top:735px;color:#9cc0ee;">(63,41)</div>
<div class="a dl" style="left:24.5px">28</div>
<div class="a dl" style="left:55.95px">06</div>
<div class="a dl" style="left:87.4px">16</div>
<div class="a dl" style="left:118.85px">26</div>
<div class="a dl" style="left:150.3px">07</div>
<div class="a dl" style="left:181.75px">15</div>
<div class="a dl" style="left:213.2px">23</div>
<div class="a dl" style="left:244.65px">31</div>
<div class="a dl" style="left:276.1px">10</div>
<div class="a dl" style="left:307.55px">18</div>
<div class="a dl" style="left:339px">28</div>
<div class="a dl" style="left:370.45px">09</div>
<div class="a dl" style="left:401.9px">17</div>
<div class="a dl" style="left:433.35px">25</div>
<div class="a dl" style="left:464.8px">02</div>
<div class="a dl" style="left:496.25px">13</div>
<div class="a dl" style="left:527.7px">22</div>
<div class="a dl" style="left:559.15px">30</div>
<div class="a dl" style="left:590.6px">11</div>
<div class="a dl" style="left:622.05px">19</div>
<div class="a dl" style="left:653.5px">27</div>
<div class="a dl" style="left:684.95px">04</div>
<div class="a dl" style="left:716.4px">15</div>
<div class="a dl" style="left:747.85px">23</div>
<div class="a dl" style="left:779.3px">01</div>
<div class="a dl" style="left:810.75px">09</div>
<div class="a dl" style="left:842.2px">17</div>
<div class="a dl" style="left:873.65px">27</div>
<div class="a dl" style="left:905.1px">04</div>
<div class="a dl" style="left:936.55px">12</div>
<div class="a dl" style="left:968px">20</div>
<div class="a dl" style="left:999.45px">28</div>
<div class="a dl" style="left:1030.9px">08</div>
<div class="a dl" style="left:1062.35px">16</div>
<div class="a dl" style="left:1093.8px">24</div>
<div class="a dl" style="left:1125.25px">02</div>
<div class="a dl" style="left:1156.7px">13</div>
<div class="a dl" style="left:1188.15px">21</div>
<div class="a dl" style="left:1219.6px">29</div>
<div class="a dl" style="left:1251.05px">09</div>
<div class="a dl" style="left:1282.5px">17</div>
<div class="a dl" style="left:1313.95px">25</div>
<div class="a dl" style="left:1345.4px">03</div>
<div class="a mb" style="left:7px;width:18px"></div>
<div class="a mb" style="left:28px;width:96px">dez/19</div>
<div class="a mb" style="left:127px;width:113px">jan/20</div>
<div class="a mb" style="left:243px;width:91px">fev/20</div>
<div class="a mb" style="left:337px;width:112px">mar/20</div>
<div class="a mb" style="left:452px;width:102px">abr/20</div>
<div class="a mb" style="left:557.5px;width:101.5px">mai/20</div>
<div class="a mb" style="left:662.5px;width:106.5px">jun/20</div>
<div class="a mb" style="left:772.5px;width:116.5px">jul/20</div>
<div class="a mb" style="left:892.5px;width:105.5px">ago/20</div>
<div class="a mb" style="left:1002.5px;width:106.5px">set/20</div>
<div class="a mb" style="left:1112.5px;width:106.5px">out/20</div>
<div class="a mb" style="left:1222.5px;width:101.5px">nov/20</div>
<div class="a mb" style="left:1327.5px;width:533px">dez/20</div>
<svg class="a" style="left:0;top:1002px" width="1920" height="28" viewBox="0 1002 1920 28">
<rect x="79.5" y="1003.5" width="82.5" height="22" fill="#fff" stroke="#d6d6d6"/>
<path d="M146.5 1011.5L153.5 1018.5M153.5 1011.5L146.5 1018.5" stroke="#222" stroke-width="1.6"/>
<g stroke="#9a9a9a" stroke-width="1.2"><path d="M305.5 1007V1023M375.5 1007V1023M463.5 1007V1023M545.5 1007V1023M697.5 1007V1023M818.5 1007V1023M878.5 1007V1023M984.5 1007V1023M1100.5 1007V1023"/></g>
<path d="M1108 1015H1120M1114 1009V1021" stroke="#222" stroke-width="2"/>
<g fill="#8a8a8a"><circle cx="1194" cy="1009.5" r="1"/><circle cx="1194" cy="1014.5" r="1"/><circle cx="1194" cy="1019.5" r="1"/></g>
<path d="M1217 1010.5L1213 1014.5L1217 1018.5" fill="none" stroke="#444" stroke-width="1.6"/>
<rect x="1870" y="1005" width="25" height="20" rx="2" fill="#d2d2d2"/>
<path d="M1904.5 1010.5L1908.5 1014.5L1904.5 1018.5" fill="none" stroke="#444" stroke-width="1.6"/>
<path d="M0 1029.5H1920" stroke="#c8c8c8"/>
<rect x="6" y="1007" width="52" height="24" fill="#000" opacity="0.12"/>
<rect x="4.5" y="1005.5" width="52" height="23.5" fill="#fff" stroke="#767676"/>
</svg>
<div class="a" style="left:10px;top:1008px;font-size:15px;color:#3a3a3a">Iniciar</div>
<div class="a" style="left:92px;top:1007px;font-size:14px;font-weight:bold;color:#111;transform:scaleX(1.1024);transform-origin:0 0;">IFR14</div>
<div class="a t13 tab" style="left:185px;top:1007px;transform:scaleX(0.9554);transform-origin:0 0;">estocastico + LS</div>
<div class="a t13 tab" style="left:328px;top:1007px;transform:scaleX(0.8953);transform-origin:0 0;">OBV</div>
<div class="a t13 tab" style="left:398px;top:1007px;transform:scaleX(0.9101);transform-origin:0 0;">Volume</div>
<div class="a t13 tab" style="left:485px;top:1007px;transform:scaleX(0.9214);transform-origin:0 0;">VWAP</div>
<div class="a t13 tab" style="left:563px;top:1007px;transform:scaleX(0.9298);transform-origin:0 0;">Bandas de Bollinger</div>
<div class="a t13 tab" style="left:719px;top:1007px;transform:scaleX(0.9935);transform-origin:0 0;">afastamento</div>
<div class="a t13 tab" style="left:840px;top:1007px;transform:scaleX(0.8289);transform-origin:0 0;">PP</div>
<div class="a t13 tab" style="left:900px;top:1007px;transform:scaleX(0.9796);transform-origin:0 0;">Tendencia</div>
<div class="a t13 tab" style="left:1007px;top:1007px;transform:scaleX(0.9274);transform-origin:0 0;">Joe Dinapoli</div>
<svg class="a" style="left:0;top:1030px" width="1920" height="50" viewBox="0 1030 1920 50">
<defs>
<linearGradient id="tbg" x1="0" y1="0" x2="1" y2="0"><stop offset="0.0000" stop-color="#22344a"/><stop offset="0.2552" stop-color="#233646"/><stop offset="0.4792" stop-color="#243848"/><stop offset="0.5208" stop-color="#283d4a"/><stop offset="0.6250" stop-color="#283d48"/><stop offset="0.6771" stop-color="#22343c"/><stop offset="0.7083" stop-color="#263a40"/><stop offset="0.7552" stop-color="#2b4044"/><stop offset="1.0000" stop-color="#2d4245"/></linearGradient>
<linearGradient id="edg" x1="0" y1="0.2" x2="1" y2="0.5"><stop offset="0" stop-color="#2a9ee8"/><stop offset="0.55" stop-color="#36b8d8"/><stop offset="1" stop-color="#62d870"/></linearGradient>
<linearGradient id="xpg" x1="0" y1="0" x2="0" y2="1"><stop offset="0" stop-color="#0e1e20"/><stop offset="1" stop-color="#2c5850"/></linearGradient>
<linearGradient id="mlg" x1="0" y1="0" x2="1" y2="1"><stop offset="0" stop-color="#1e9ee8"/><stop offset="1" stop-color="#3ac8f8"/></linearGradient>
</defs>
<rect x="0" y="1030" width="1920" height="50" fill="url(#tbg)"/>
<rect x="0" y="1030" width="60" height="50" fill="#2f4058"/>
<path d="M20 1047.3L28.8 1046.1V1054.5H20ZM30.2 1045.9L40.2 1044.5V1054.5H30.2ZM20 1055.9H28.8V1064.3L20 1063.1ZM30.2 1055.9H40.2V1065.9L30.2 1064.5Z" fill="#5aa8f2"/>
<rect x="60" y="1030" width="430" height="50" fill="#f0f0f0"/>
<path d="M1 1030.5H490" stroke="#d8d8d8" stroke-width="1"/>
<circle cx="88" cy="1052.5" r="6.3" fill="none" stroke="#111" stroke-width="1.4"/>
<path d="M83.6 1057L75.5 1065" stroke="#111" stroke-width="1.5"/>
<circle cx="520" cy="1055" r="8.8" fill="none" stroke="#fff" stroke-width="2.3"/>
<g fill="none" stroke="#fff" stroke-width="1.3"><path d="M570.5 1044.5V1046.5H583V1044.5M570.5 1065.5V1063.5H583V1065.5"/><rect x="570.5" y="1050.5" width="12.5" height="8"/><path d="M588.5 1045V1064"/></g>
<rect x="587" y="1051" width="3" height="3" fill="#fff"/>
<circle cx="644" cy="1055" r="15" fill="url(#edg)"/>
<path d="M629.2 1056C629.5 1065 636.5 1070 644 1070C651 1070 656.5 1066.5 658.8 1062C653 1065.5 645 1066 640.5 1062C636.5 1058.5 637 1052.5 642.5 1050.5C636 1049 629.8 1051 629.2 1056Z" fill="#0e5cb8"/>
<ellipse cx="646.5" cy="1055.5" rx="4.6" ry="3.6" fill="#243848"/>
<path d="M692 1044H703L705 1046H719.4V1065.6H692Z" fill="#f8c850"/>
<path d="M692 1044H703L705 1047H692Z" fill="#e0a020"/>
<path d="M697 1065.6V1055.5H714V1065.6H710V1060H701V1065.6Z" fill="#3a8ee0"/>
<rect x="753" y="1048" width="29" height="22" rx="1.5" fill="#f4f4f4"/>
<path d="M759.5 1048V1041.5H775.5V1048" fill="none" stroke="#e8e8e8" stroke-width="2.2"/>
<rect x="762" y="1054.2" width="4.6" height="4.6" fill="#f25022"/><rect x="767.4" y="1054.2" width="4.6" height="4.6" fill="#7fba00"/>
<rect x="762" y="1059.6" width="4.6" height="4.6" fill="#00a4ef"/><rect x="767.4" y="1059.6" width="4.6" height="4.6" fill="#ffb900"/>
<path d="M815 1050L830 1041.5L845 1050V1069H815Z" fill="#0a5cb0"/>
<rect x="815" y="1050" width="30" height="19" fill="url(#mlg)"/>
<path d="M815 1050H845L830 1058Z" fill="#e8e8e8"/>
<path d="M815 1069L845 1052V1069Z" fill="#1a8ee0" opacity="0.5"/>
<circle cx="892" cy="1054.7" r="14" fill="#dd4b3e"/>
<path d="M892 1054.7L904.1 1047.7A14 14 0 0 1 885 1066.8Z" fill="#fdc732"/>
<path d="M892 1054.7L885 1066.8A14 14 0 0 1 879.9 1047.7Z" fill="#23a55a"/>
<path d="M892 1054.7L879.9 1047.7A14 14 0 0 1 904.1 1047.7Z" fill="#dd4b3e"/>
<circle cx="892" cy="1054.7" r="6.2" fill="#fff"/><circle cx="892" cy="1054.7" r="4.8" fill="#4a8cf0"/>
<rect x="924" y="1030" width="56" height="50" fill="#52616b"/>
<rect x="980" y="1030" width="5" height="50" fill="#3e4e58"/>
<rect x="939.3" y="1040.2" width="30" height="30" fill="url(#xpg)"/>
<text x="954.3" y="1061" style="font-size:15px;font-weight:bold;fill:#eee;text-anchor:middle">XP</text>
<rect x="867" y="1078" width="51.3" height="2" fill="#78b4f0"/>
<rect x="924" y="1078" width="61" height="2" fill="#78b4f0"/>
<polyline points="1634.5,1059 1642,1051.5 1649.5,1059" fill="none" stroke="#fff" stroke-width="1.2"/>
<g fill="none" stroke="#fff" stroke-width="1.1"><path d="M1665.5 1063A15 15 0 0 1 1680.5 1048"/><path d="M1669 1063A11.5 11.5 0 0 1 1680.5 1051.5"/><path d="M1672.5 1063A8 8 0 0 1 1680.5 1055"/></g>
<circle cx="1678.5" cy="1061.5" r="1.3" fill="#fff"/>
<path d="M1692.5 1051.5H1696L1701 1047V1063.5L1696 1059H1692.5Z" fill="none" stroke="#fff" stroke-width="1.1"/>
<g fill="none" stroke="#fff" stroke-width="1.1"><path d="M1704 1052.5Q1706 1055.3 1704 1058"/><path d="M1707 1050Q1710.5 1055.3 1707 1060.5"/><path d="M1710 1047Q1715 1055.3 1710 1063.5"/></g>
<path d="M1869.5 1045.5H1888.5V1062.5H1882L1879 1065.5L1876 1062.5H1869.5Z" fill="none" stroke="#fff" stroke-width="1.2"/>
<path d="M1914.5 1030V1080" stroke="#5a6a70" stroke-width="1"/>
</svg>
<div class="a" style="left:110px;top:1045px;font-size:18.5px;color:#1e1e1e;white-space:nowrap;transform:scaleX(1.0284);transform-origin:0 0;">Digite aqui para pesquisar</div>
<div class="a tb" style="left:1725px;top:1036px;font-size:15px;transform:scaleX(0.8769);transform-origin:0 0;">POR</div>
<div class="a tb" style="left:1727px;top:1058px;font-size:15px;transform:scaleX(0.8390);transform-origin:0 0;">PTB</div>
<div class="a tb" style="left:1791px;top:1036px;font-size:15px;transform:scaleX(0.9203);transform-origin:0 0;">19:11</div>
<div class="a tb" style="left:1770px;top:1058px;font-size:15px">06/12/2020</div>
</body></html>
